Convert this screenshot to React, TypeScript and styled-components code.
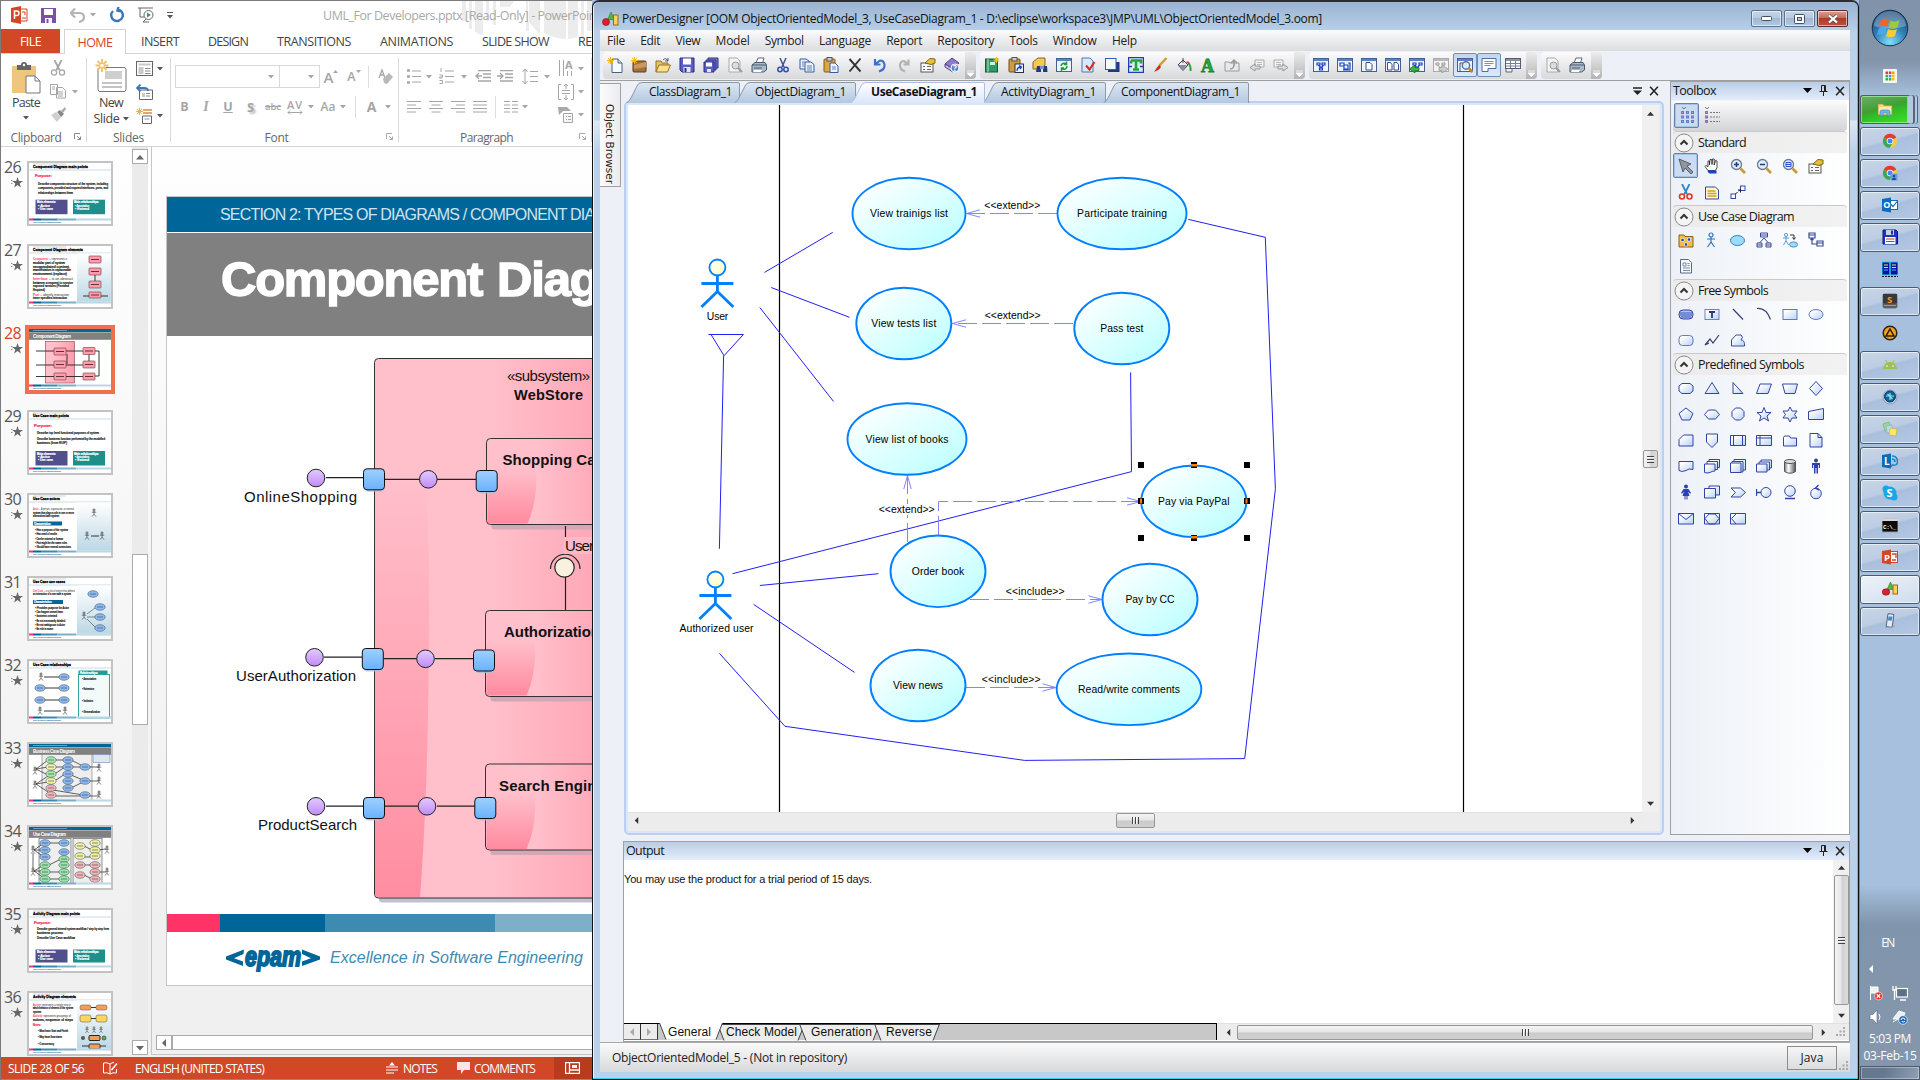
import React, { useLayoutEffect, useRef, useState } from "react";
import styled, { createGlobalStyle, css } from "styled-components";

const UI = `"Open Sans", "Noto Sans", sans-serif`;
const ARIAL = `"Liberation Sans", Arial, sans-serif`;

const Global = createGlobalStyle`
  * { box-sizing: border-box; }
  html, body { margin: 0; padding: 0; overflow: hidden; background: #a7c0dd; }
  svg { display: block; flex: none; }
`;

/* ---------- text fitted to a given run length ---------- */
const FitSpan = styled.span`
  display: inline-block;
  white-space: pre;
  flex: none;
`;
function Fit({ w, children, className }: { w: number; children: string; className?: string }) {
  const ref = useRef<HTMLSpanElement>(null);
  const [ls, setLs] = useState(0);
  useLayoutEffect(() => {
    const r = ref.current!.getBoundingClientRect();
    setLs((w - Math.max(r.width, r.height)) / children.length);
  }, [w, children]);
  return (
    <FitSpan ref={ref} className={className} style={{ letterSpacing: `${ls}px` }}>
      {children}
    </FitSpan>
  );
}

/* ---------- shell ---------- */
const Desktop = styled.div`
  width: 1920px;
  height: 1080px;
  display: flex;
  overflow: hidden;
  font-family: ${UI};
  font-size: 12px;
  color: #222;
`;

/* =================== PowerPoint =================== */
const Ppt = styled.div`
  width: 592px;
  height: 1080px;
  display: flex;
  flex-direction: column;
  border-left: 1px solid #7b7b7b;
  border-top: 1px solid #7b7b7b;
  background: #fff;
  overflow: hidden;
`;
const PptTitle = styled.div`
  height: 28px;
  display: flex;
  align-items: center;
  position: relative;
  padding-left: 10px;
  flex: none;
`;
const TitleArt = styled.svg`
  position: absolute;
  left: 455px;
  top: 0;
`;
const PptCaption = styled.div`
  margin-left: 150px;
  color: #a9a9a9;
  font-size: 12.5px;
  position: relative;
  white-space: nowrap;
`;
const PptTabs = styled.div`
  height: 25px;
  display: flex;
  align-items: stretch;
  border-bottom: 1px solid #d4d4d4;
  font-size: 12.5px;
  color: #444;
  flex: none;
  position: relative;
`;
const FileTab = styled.div`
  width: 59px;
  background: #d24726;
  color: #fff;
  display: flex;
  align-items: center;
  justify-content: center;
  flex: none;
`;
const PptTab = styled.div<{ $ml: number; $active?: boolean }>`
  margin-left: ${(p) => p.$ml}px;
  display: flex;
  align-items: center;
  flex: none;
  ${(p) =>
    p.$active &&
    css`
      width: 62px;
      justify-content: center;
      color: #d24726;
      border: 1px solid #d4d4d4;
      border-bottom: none;
      background: #fff;
      margin-bottom: -1px;
    `}
`;
const Ribbon = styled.div`
  height: 93px;
  display: flex;
  border-bottom: 1px solid #d4d4d4;
  padding-top: 4px;
  flex: none;
`;
const Group = styled.div<{ $w: number }>`
  width: ${(p) => p.$w}px;
  height: 84px;
  border-right: 1px solid #d9d9d9;
  display: flex;
  flex-direction: column;
  justify-content: space-between;
  flex: none;
`;
const GroupBody = styled.div`
  display: flex;
  height: 71px;
`;
const GroupLabel = styled.div`
  height: 16px;
  display: flex;
  align-items: center;
  justify-content: center;
  color: #666;
  font-size: 12px;
  position: relative;
  margin-bottom: -3px;
`;
const Launcher = styled.svg`
  position: absolute;
  right: 5px;
  top: 4px;
`;
const Col = styled.div<{ $w?: number; $ml?: number; $pt?: number; $gap?: number; $start?: boolean }>`
  display: flex;
  flex-direction: column;
  align-items: ${(p) => (p.$start ? "flex-start" : "center")};
  width: ${(p) => (p.$w ? p.$w + "px" : "auto")};
  margin-left: ${(p) => p.$ml || 0}px;
  padding-top: ${(p) => p.$pt || 0}px;
  gap: ${(p) => p.$gap || 0}px;
  flex: none;
`;
const Row = styled.div<{ $h?: number; $gap?: number; $ml?: number; $mt?: number }>`
  display: flex;
  align-items: center;
  height: ${(p) => (p.$h ? p.$h + "px" : "auto")};
  gap: ${(p) => p.$gap || 0}px;
  margin-left: ${(p) => p.$ml || 0}px;
  margin-top: ${(p) => p.$mt || 0}px;
`;
const Cell = styled.div<{ $w: number }>`
  width: ${(p) => p.$w}px;
  display: flex;
  align-items: center;
  justify-content: center;
  flex: none;
`;
const BigLabel = styled.div`
  height: 16px;
  line-height: 16px;
  font-size: 12.5px;
  color: #444;
  display: flex;
  align-items: center;
  gap: 3px;
`;
const Combo = styled.div<{ $w: number }>`
  width: ${(p) => p.$w}px;
  height: 23px;
  border: 1px solid #d9d9d9;
  margin-right: -1px;
  display: flex;
  align-items: center;
  justify-content: flex-end;
  padding-right: 5px;
`;
const Glyph = styled.span<{ $b?: boolean; $i?: boolean; $u?: boolean; $s?: number; $strike?: boolean; $shadow?: boolean }>`
  color: #a6a6a6;
  font-size: ${(p) => p.$s || 13}px;
  line-height: 16px;
  font-weight: ${(p) => (p.$b ? 700 : 600)};
  font-style: ${(p) => (p.$i ? "italic" : "normal")};
  font-family: ${(p) => (p.$i ? `"Liberation Serif", serif` : UI)};
  text-decoration: ${(p) => (p.$u ? "underline" : p.$strike ? "line-through" : "none")};
  text-shadow: ${(p) => (p.$shadow ? "2px 2px 2px #bbb" : "none")};
`;
const Sep = styled.div<{ $h?: number }>`
  width: 1px;
  height: ${(p) => p.$h || 22}px;
  background: #dcdcdc;
`;
const PptMain = styled.div`
  height: 910px;
  display: flex;
  flex: none;
  background: linear-gradient(#fefefe, #f0f0f0 85%);
`;
const ThumbList = styled.div`
  width: 131px;
  height: 910px;
  padding-top: 14px;
  overflow: hidden;
  flex: none;
`;
const ThumbRow = styled.div`
  height: 83px;
  display: flex;
`;
const ThumbNum = styled.div<{ $sel?: boolean }>`
  width: 26px;
  font-size: 16px;
  line-height: 12px;
  color: ${(p) => (p.$sel ? "#d24726" : "#555")};
  display: flex;
  flex-direction: column;
  align-items: flex-start;
  gap: 4px;
  padding-left: 3px;
`;
const StarMark = styled.svg`
  margin-left: 7px;
`;
const ThumbFrame = styled.div<{ $sel?: boolean }>`
  width: 86px;
  height: 65px;
  border: 2px solid ${(p) => (p.$sel ? "#f0704d" : "#c3c3c3")};
  outline: ${(p) => (p.$sel ? "2px solid #f0704d" : "none")};
  background: #fff;
  overflow: hidden;
`;
const VScroll = styled.div`
  width: 16px;
  height: 909px;
  padding-top: 2px;
  display: flex;
  flex-direction: column;
  flex: none;
  background: #ebebeb;
`;
const ScrollBox = styled.div<{ $h: number; $mt?: number }>`
  height: ${(p) => p.$h}px;
  margin-top: ${(p) => p.$mt || 0}px;
  border: 1px solid #ababab;
  background: #fff;
  display: flex;
  align-items: center;
  justify-content: center;
  flex: none;
`;
const Stage = styled.div`
  margin-left: 3px;
  border-left: 1px solid #c6c6c6;
  flex: 1;
  min-width: 0;
  height: 908px;
  overflow: hidden;
  border-bottom: 1px solid #c6c6c6;
`;
const Slide = styled.div`
  margin: 49px 0 0 14px;
  height: 790px;
  border: 1px solid #c6c6c6;
  border-right: none;
  background: #fff;
  overflow: hidden;
`;
const SectionBand = styled.div`
  height: 35px;
  background: #006699;
  color: #cfe4f2;
  font: 16px ${ARIAL};
  padding-left: 53px;
  display: flex;
  align-items: center;
  margin-bottom: 1px;
`;
const TitleBand = styled.div`
  height: 103px;
  background: #808080;
  color: #fff;
  font: bold 49px ${ARIAL};
  -webkit-text-stroke: 1.5px #fff;
  padding: 0 0 12px 54px;
  display: flex;
  align-items: center;
  gap: 15px;
  white-space: nowrap;
`;
const Stripe = styled.div`
  height: 18px;
  display: flex;
`;
const StripePart = styled.div<{ $w: number; $c: string }>`
  width: ${(p) => p.$w}px;
  background: ${(p) => p.$c};
  flex: none;
`;
const SlideFoot = styled.div`
  height: 53px;
  padding: 14px 0 0 59px;
  display: flex;
  gap: 10px;
  color: #3f8ab3;
  font: italic 16px ${ARIAL};
`;
const Tagline = styled.div`
  padding-top: 3px;
`;
const HScroll = styled.div`
  margin: 49px 0 0 4px;
  height: 15px;
  display: flex;
`;
const HBtn = styled.div`
  width: 16px;
  border: 1px solid #ababab;
  background: #fff;
  display: flex;
  align-items: center;
  justify-content: center;
`;
const HThumb = styled.div`
  flex: 1;
  border: 1px solid #ababab;
  border-right: none;
  background: #fff;
`;
const PptStatus = styled.div`
  height: 23px;
  background: #d24726;
  border-bottom: 1px solid #8a8a8a;
  color: #fff;
  font-size: 12px;
  display: flex;
  align-items: center;
  padding-left: 7px;
  flex: none;
`;
const Push = styled.div<{ $w: number }>`
  width: ${(p) => p.$w}px;
  flex: none;
`;
const ViewBtn = styled.div`
  width: 38px;
  height: 22px;
  background: #b83b1d;
  display: flex;
  align-items: center;
  padding-left: 11px;
`;

const Caret = ({ c = "#a6a6a6" }: { c?: string }) => (
  <svg width="6" height="4" viewBox="0 0 6 4"><path d="M0 0h6L3 3.6z" fill={c} /></svg>
);
const Tri = ({ d, c = "#555", s = 8 }: { d: "up" | "down" | "left" | "right"; c?: string; s?: number }) => {
  const p = { up: "M0 6.5L4 2l4 4.5z", down: "M0 2h8L4 6.5z", left: "M6 0v8L2 4z", right: "M2 0v8l4-4z" }[d];
  return <svg width={s} height={s} viewBox="0 0 8 8"><path d={p} fill={c} /></svg>;
};

function Epam() {
  return (
    <svg width="94" height="26" viewBox="0 0 94 26">
      <path d="M18 3.5L0 10.500v3l17 6.500V15.500L8 12.200 17.500 8zM76 3.500L94 10.500v3l-18 6.500V15.500l9-3.300L76 8z" fill="#00669a" />
      <text x="19" y="20" fontFamily={ARIAL} fontWeight="700" fontStyle="italic" fontSize="27" textLength="56" lengthAdjust="spacingAndGlyphs" fill="#00669a" stroke="#00669a" strokeWidth="1.9">epam</text>
    </svg>
  );
}

/* ---------- component diagram on the slide ---------- */
const CompBox = ({ x, y, label, tx, tw }: { x: number; y: number; label: string; tx: number; tw: number }) => (
  <g>
    <rect x={x + 5} y={y + 5} width="150" height="86" rx="3" fill="#d3a7b5" />
    <rect x={x} y={y} width="150" height="86" rx="4" fill="url(#pinkH2)" stroke="#333" />
    <path d={`M${x + 1} ${y + 30}h48q3 30-8 55h-37q-3 0-3-3z`} fill="url(#gloss2)" />
    <text x={tx} y={y + 26.5} fontWeight="700" fontSize="15" textLength={tw}>{label}</text>
  </g>
);
const Port = ({ x, y }: { x: number; y: number }) => (
  <g>
    <rect x={x + 2} y={y + 5} width="18" height="18" rx="3" fill="#a9bdd6" opacity=".8" />
    <rect x={x} y={y} width="21" height="21" rx="3.5" fill="url(#portG)" stroke="#111" />
  </g>
);
const Ball = ({ x, y }: { x: number; y: number }) => <circle cx={x} cy={y} r="8.8" fill="url(#ballG)" stroke="#222" />;

function SlideDiagram() {
  return (
    <svg width="427" height="578" viewBox="167 336 427 578" fontFamily={ARIAL} fontSize="15" fill="#111">
      <defs>
        <linearGradient id="pinkH" gradientUnits="userSpaceOnUse" x1="374" x2="640" y1="0" y2="0"><stop offset=".45" stopColor="#ffbfcb" /><stop offset="1" stopColor="#ff9dad" /></linearGradient>
        <linearGradient id="pinkH2" x1="0" x2="1" y1="0" y2="0"><stop offset=".35" stopColor="#ffbfcb" /><stop offset="1" stopColor="#ff9aab" /></linearGradient>
        <linearGradient id="gloss" x1="0" x2="0" y1="0" y2="1"><stop offset="0" stopColor="#ffbfcb" /><stop offset="1" stopColor="#ff8da1" /></linearGradient>
        <linearGradient id="gloss2" x1="0" x2="0" y1="0" y2="1"><stop offset="0" stopColor="#ffbfcb" /><stop offset="1" stopColor="#ff8a9f" /></linearGradient>
        <linearGradient id="portG" x1="0" x2="0" y1="0" y2="1"><stop offset="0" stopColor="#9fd0ff" /><stop offset="1" stopColor="#6ab2fb" /></linearGradient>
        <linearGradient id="ballG" x1="0" x2="0" y1="0" y2="1"><stop offset="0" stopColor="#e2cbff" /><stop offset="1" stopColor="#c08bf7" /></linearGradient>
      </defs>
      <rect x="379" y="364" width="260" height="538.5" rx="3" fill="#bfc1d3" />
      <rect x="374.5" y="358.5" width="260" height="539.5" rx="4" fill="url(#pinkH)" stroke="#333" />
      <path d="M375 480h51q3 60 3 120q0 180-9 297h-42q-3 0-3-3z" fill="url(#gloss)" />
      <CompBox x={486.5} y={438.5} label="Shopping Cart" tx={502.5} tw={104} />
      <CompBox x={485.5} y={610.5} label="Authorization" tx={504} tw={96} />
      <CompBox x={485.5} y={764} label="Search Engine" tx={499} tw={106} />
      <g stroke="#222" strokeWidth="1.2">
        <path d="M326 477.7h38M385 479.3h35M437 479.3h39M324 657.2h38M384 658.6h33M435 658.6h39M326 806.2h38M385 806.2h33M437 806.2h38" />
        <path d="M565.5 526v12M565.5 577v33" />
        <path d="M550.5 569a14.6 14.6 0 0 1 29.5 0" fill="none" />
        <circle cx="564.5" cy="567.5" r="9.7" fill="#faf0e0" />
      </g>
      <rect x="564" y="537" width="40" height="17" fill="#ffb9c6" />
      <text x="565" y="551" textLength="29">User</text>
      <Ball x={316} y={478} /><Ball x={428.3} y={479.3} /><Ball x={314.5} y={657.3} /><Ball x={425.5} y={658.8} /><Ball x={316} y={806.3} /><Ball x={427} y={806.3} />
      <Port x={363.5} y={468.8} /><Port x={476.2} y={470.5} /><Port x={362.3} y={648.5} /><Port x={473.5} y={650} /><Port x={363.5} y={797.5} /><Port x={474.8} y={797.5} />
      <text x="507" y="381" textLength="83">«subsystem»</text>
      <text x="514" y="400" textLength="69" fontWeight="700" fontSize="14.5">WebStore</text>
      <text x="244" y="502" textLength="113">OnlineShopping</text>
      <text x="236" y="681" textLength="120">UserAuthorization</text>
      <text x="258" y="830" textLength="99">ProductSearch</text>
    </svg>
  );
}

/* ---------- thumbnails ---------- */
const Man = ({ x, y, s = 1 }: { x: number; y: number; s?: number }) => (
  <g transform={`translate(${x} ${y}) scale(${s})`} stroke="#333" strokeWidth=".6" fill="none">
    <circle r="1.1" cy="-3" fill="#e8c896" /><path d="M0-2v3.2M-2.2-.8h4.4M0 1.2l-2 2.4M0 1.2l2 2.4" />
  </g>
);
const Ov = ({ x, y, c = "#8db9f0" }: { x: number; y: number; c?: string }) => (
  <g><ellipse cx={x} cy={y} rx="5.2" ry="3.3" fill={c} stroke="#345" strokeWidth=".5" /><path d={`M${x - 3} ${y}h6`} stroke="#345" strokeWidth=".6" /></g>
);
const PinkBox = ({ x, y, w = 12, h = 7 }: { x: number; y: number; w?: number; h?: number }) => (
  <g><rect x={x} y={y} width={w} height={h} rx=".7" fill="#ff9cae" stroke="#733" strokeWidth=".6" /><path d={`M${x + 2} ${y + h / 2}h${w - 4}`} stroke="#522" strokeWidth=".9" /></g>
);
const Foot = () => (
  <g><rect y="55.5" width="4" height="2" fill="#ff3366" /><rect x="4" y="55.5" width="8" height="2" fill="#069" /><rect x="12" y="55.5" width="16" height="2" fill="#3d8bb0" /><rect x="28" y="55.5" width="19" height="2" fill="#7db0c8" /><rect x="47" y="55.5" width="35" height="2" fill="#bcd8e4" /><text x="4" y="60.3" fontSize="2" fill="#069" fontStyle="italic" textLength="28">epam | Excellence in Software Engineering</text></g>
);
const Head = ({ t, w }: { t: string; w: number }) => (
  <g><path d="M4 1h33" stroke="#999" strokeWidth=".4" /><text x="4" y="5.4" fontSize="4.2" fontWeight="700" fill="#000" stroke="#000" strokeWidth=".3" textLength={w} lengthAdjust="spacingAndGlyphs">{t}</text><path d="M0 7h82" stroke="#b9d3e2" strokeWidth=".8" /></g>
);
/* a line of body text; `red` is the highlighted word that opens it */
const Tx = ({ x, y, w, t, c = "#222", b, red }: { x: number; y: number; w: number; t: string; c?: string; b?: boolean; red?: string }) => (
  <text x={x} y={y} fontSize="2.9" textLength={w} lengthAdjust="spacingAndGlyphs" fill={c} fontWeight={b ? 700 : 500} stroke={red ? "none" : c} strokeWidth=".2">
    {red && <tspan fill="#ff3366" fontWeight="700">{red} </tspan>}
    {t}
  </text>
);
const DarkHead = ({ t, w }: { t: string; w: number }) => (
  <g><rect width="82" height="3" fill="#069" /><rect y="3.3" width="82" height="7.5" fill="#808080" /><text x="4" y="8.8" fontSize="4.5" fontWeight="700" fill="#fff" textLength={w}>{t}</text><path d="M4 1.5h34" stroke="#9fc6dc" strokeWidth=".6" /></g>
);
const TwoBoxes = ({ y, h = 14.5 }: { y: number; h?: number }) => (
  <g>
    <rect x="6.5" y={y} width="32" height={h} fill="#52508c" /><rect x="44" y={y} width="32" height={h} fill="#1f8f8b" />
    <Tx x={8} y={y + 3.6} w={19} t="Main elements:" c="#fff" b /><Tx x={45} y={y + 3.6} w={25} t="Main relationships:" c="#fff" b />
    <Tx x={9} y={y + 7} w={12} t="• Actor" c="#fff" /><Tx x={46} y={y + 7} w={14} t="• Association" c="#fff" />
    <Tx x={9} y={y + 10.3} w={15} t="• Use case" c="#fff" /><Tx x={46} y={y + 10.3} w={14} t="• Extend" c="#fff" />
  </g>
);
const SidePane = () => <rect x="48" y="7.4" width="34" height="48.2" fill="url(#sideG)" />;

const thumbs: { n: number; art: React.ReactNode }[] = [
  { n: 26, art: <><Head t="Component Diagram main points" w={55} /><Tx x={6} y={14} w={17} t="Purpose:" c="#ff3366" b /><Tx x={9} y={22} w={70} t="Describe components structure of the system, including" /><Tx x={9} y={26} w={70} t="components, provided and required interfaces, ports, and" /><Tx x={9} y={30.5} w={35} t="relationships between them" /><TwoBoxes y={36.7} /><Foot /></> },
  { n: 27, art: <><Head t="Component Diagram elements" w={50} /><SidePane /><Tx x={4} y={14} w={34} red="Component" t="– represents a" /><Tx x={4} y={18} w={32} t="modular part of system" /><Tx x={4} y={21.5} w={36} t="encapsulated content" /><Tx x={4} y={25} w={38} t="manifestation is replaceable" /><Tx x={4} y={28.5} w={34} t="environment (replace)" /><Tx x={4} y={34} w={40} red="Interface" t="– is an abstract" /><Tx x={4} y={37.5} w={40} t="between a request to service" /><Tx x={4} y={41} w={36} t="exposed services (Provided" /><Tx x={4} y={44.5} w={12} t="Required)" /><Tx x={4} y={49.5} w={36} red="Port" t="– identify interaction" /><Tx x={4} y={53} w={34} t="inner specifies interaction" /><PinkBox x={60} y={10} /><PinkBox x={60} y={22} /><PinkBox x={60} y={35} /><PinkBox x={60} y={46} h={6} /><path d="M66 29v6M54 50h6M72 50h7" stroke="#222" strokeWidth=".9" /><Foot /></> },
  { n: 28, art: <><DarkHead t="Component Diagram" w={38} /><rect x="16.5" y="12.5" width="29" height="41.5" fill="url(#pinkH2)" stroke="#844" strokeWidth=".6" /><path d="M7 22h50M7 36h50M7 47.5h50M62 22h8v25h-8M38 25v10M60 25v10" fill="none" stroke="#222" strokeWidth=".9" /><PinkBox x={25} y={19} /><PinkBox x={25} y={32} /><PinkBox x={25} y={44} /><PinkBox x={54} y={18.5} /><PinkBox x={54} y={32} /><PinkBox x={54} y={44} /><Foot /></> },
  { n: 29, art: <><Head t="Use Case main points" w={36} /><Tx x={5} y={15} w={18} t="Purpose:" c="#ff3366" b /><Tx x={8} y={22} w={62} t="Describe top level functional purposes of system" /><Tx x={8} y={28} w={68} t="Describe business function performed by the modelled" /><Tx x={8} y={32} w={30} t="business (from RUP)" /><TwoBoxes y={39} /><Foot /></> },
  { n: 30, art: <><Head t="Use Case actors" w={27} /><SidePane /><Tx x={4} y={15} w={41} red="Actor" t="– A person, organization, or external" /><Tx x={4} y={18.5} w={41} t="system that plays a role in one or more" /><Tx x={4} y={22} w={26} t="interactions with system" /><rect x="4" y="26.5" width="29" height="4" fill="#069" /><Tx x={5} y={29.7} w={17} t="Characteristics:" c="#fff" b /><Tx x={6} y={35.5} w={33} t="• Has a purpose of the system" /><Tx x={6} y={40} w={22} t="• Has need of results" /><Tx x={6} y={44.5} w={28} t="• Can be external or human" /><Tx x={6} y={49} w={32} t="• Part might be the same roles" /><Tx x={6} y={53} w={36} t="• Should have several connections" /><Man x={65} y={18} /><Man x={58} y={41} /><Man x={73} y={41} /><path d="M62 41h8" stroke="#222" strokeWidth=".9" /><Foot /></> },
  { n: 31, art: <><Head t="Use Case use cases" w={32} /><SidePane /><Tx x={4} y={13.5} w={42} red="Use Case" t="– is a list of events that defines" /><Tx x={4} y={17} w={38} t="an interaction of a user with a system" /><rect x="4" y="22" width="30" height="4" fill="#069" /><Tx x={5} y={25.2} w={18} t="Characteristics:" c="#fff" b /><Tx x={6} y={31} w={34} t="• Provides purpose for Actor" /><Tx x={6} y={35} w={28} t="• Can happen several times" /><Tx x={6} y={39} w={22} t="• business oriented" /><Tx x={6} y={43.5} w={30} t="• Be not necessarily detailed" /><Tx x={6} y={48} w={30} t="• Be not ambiguous to Actor" /><Tx x={6} y={52} w={18} t="• Be rich in name" /><Ov x={64} y={16} /><Ov x={71} y={29} /><Ov x={71} y={39} /><Ov x={71} y={50} /><Man x={55} y={38} /><path d="M58 36l8-6M58 39h8M58 41l8 8" stroke="#222" strokeWidth=".5" /><Foot /></> },
  { n: 32, art: <><Head t="Use Case relationships" w={38} /><rect x="49.5" y="9.5" width="29" height="4" fill="#1f9a96" /><rect x="49.5" y="13.5" width="31" height="43.5" fill="#f3fafa" stroke="#1f9a96" strokeWidth=".9" /><Tx x={51} y={12.6} w={18} t="Relationships:" c="#fff" b /><Tx x={53} y={19} w={14} t="• Association" /><Tx x={53} y={29} w={12} t="• Extension" /><Tx x={53} y={41} w={11} t="• Inclusion" /><Tx x={53} y={51.5} w={18} t="• Generalization" /><Man x={12} y={16} /><path d="M15 16h15M16 27h14M16 39h14M15 50h17" stroke="#222" strokeWidth=".9" /><Ov x={35} y={16} /><Ov x={11} y={27} /><Ov x={35} y={27} /><Ov x={11} y={39} /><Ov x={35} y={39} /><Man x={11} y={50} /><Man x={36} y={50} /><Foot /></> },
  { n: 33, art: <><DarkHead t="Business Case Diagram" w={42} /><rect x="13" y="10.5" width="50" height="46" fill="#eee" stroke="#777" strokeWidth=".6" /><rect x="64" y="10.5" width="17" height="8" fill="#dbe8f4" stroke="#57a" strokeWidth=".5" /><path d="M7 25l12-9M7 25l12-2M7 25l12 6M7 40l12-8M7 40l12-2M7 40l12 8M24 16l12 0M24 23h28M24 31l12-8M24 38l12-8M42 16l12 6M42 31l12 5M42 44l12-6M24 46l30 5M24 52h46M56 23h14M56 37h14" stroke="#222" strokeWidth=".7" fill="none" /><Ov x={22} y={16} c="#a4eaa4" /><Ov x={22} y={23} c="#f3f1a0" /><Ov x={22} y={30} c="#a4eaa4" /><Ov x={22} y={37} c="#f3f1a0" /><Ov x={22} y={44} c="#f7b4b4" /><Ov x={22} y={51} c="#f7b4b4" /><Ov x={39} y={16} /><Ov x={39} y={23} /><Ov x={39} y={30} /><Ov x={39} y={37} /><Ov x={39} y={44} /><Ov x={56} y={23} /><Ov x={56} y={37} /><Ov x={56} y={51} /><Man x={6} y={27} /><Man x={6} y={41} /><Man x={70} y={24} /><Man x={70} y={37} /><Man x={70} y={51} /><Foot /></> },
  { n: 34, art: <><DarkHead t="Use Case Diagram" w={33} /><rect x="10" y="11.5" width="32" height="45" fill="#eee" stroke="#666" strokeWidth=".7" /><rect x="44" y="11.5" width="29" height="45" fill="#eee" stroke="#666" strokeWidth=".7" /><path d="M5 23l10-7M5 23h10M5 23l10 7M4 26v15M5 44l10-6M5 44h10M5 44l10 7M20 16h12M20 38l12-6M20 45h12M20 52h12M55 19l8 4M55 30h8M55 38h8M55 48l8 4M68 23l9-1M68 45l9 0" stroke="#222" strokeWidth=".7" /><Ov x={16} y={16} /><Ov x={16} y={23} /><Ov x={16} y={30} /><Ov x={35} y={16} /><Ov x={35} y={25} /><Ov x={35} y={32} c="#97e6a4" /><Ov x={16} y={38} c="#97e6a4" /><Ov x={16} y={45} c="#97e6a4" /><Ov x={16} y={52} c="#97e6a4" /><Ov x={35} y={38} c="#97e6a4" /><Ov x={35} y={45} c="#97e6a4" /><Ov x={35} y={52} c="#97e6a4" /><Ov x={51} y={19} c="#f3f1a0" /><Ov x={66} y={16} c="#f3f1a0" /><Ov x={66} y={23} c="#f3f1a0" /><Ov x={51} y={29} c="#f3f1a0" /><Ov x={66} y={29} c="#f3f1a0" /><Ov x={51} y={38} c="#f7b4b4" /><Ov x={66} y={38} c="#f7b4b4" /><Ov x={66} y={45} c="#f7b4b4" /><Ov x={51} y={48} c="#f7b4b4" /><Ov x={66} y={52} c="#f7b4b4" /><Man x={4} y={23} /><Man x={4} y={45} /><Man x={78} y={23} /><Man x={78} y={45} /><Foot /></> },
  { n: 35, art: <><Head t="Activity Diagram main points" w={47} /><Tx x={5} y={14} w={17} t="Purpose:" c="#ff3366" b /><Tx x={8} y={20} w={72} t="Describe general internal system workflow / step by step from" /><Tx x={8} y={23.5} w={26} t="business process" /><Tx x={8} y={28.5} w={38} t="Describe Use Case workflow" /><TwoBoxes y={39.5} h={13} /><Foot /></> },
  { n: 36, art: <><Head t="Activity Diagram elements" w={43} /><SidePane /><Tx x={4} y={12.5} w={38} red="Action" t="represents a single step in" /><Tx x={4} y={16} w={40} t="which behavior of element of the system" /><Tx x={4} y={20} w={8} t="system" /><Tx x={4} y={24} w={38} red="Activity" t="represents groupings of" /><Tx x={4} y={27.5} w={40} t="actions, sequence of steps" /><Tx x={4} y={33} w={8} t="Notes:" c="#ff3366" b /><Tx x={9} y={38.5} w={30} t="• Must have Start and Finish" /><Tx x={9} y={45} w={24} t="• May have flow states" /><Tx x={9} y={52} w={16} t="• Concurrency" /><path d="M62 14.5h5M62 25.500h5M60 46h8M53 53h24" stroke="#222" strokeWidth=".9" /><rect x="51" y="12" width="11" height="5" rx="2" fill="#f0a05a" stroke="#743" strokeWidth=".5" /><rect x="67" y="12" width="11" height="5" rx="2" fill="#f0a05a" stroke="#743" strokeWidth=".5" /><rect x="51" y="22" width="11" height="7" rx="2" fill="#f4da62" stroke="#743" strokeWidth=".5" /><rect x="67" y="22" width="11" height="7" rx="2" fill="#f4da62" stroke="#743" strokeWidth=".5" /><Man x={58} y={37} s={0.8} /><Man x={65} y={37} s={0.8} /><Man x={72} y={37} s={0.8} /><rect x="60" y="42.5" width="11" height="5" rx="1" fill="#f0a05a" stroke="#222" /><circle cx="54" cy="45" r="2" fill="#555" /><circle cx="75" cy="45" r="2" fill="#7a5" stroke="#222" strokeWidth=".6" /><rect x="60" y="51" width="11" height="5" rx="1" fill="#f0a05a" stroke="#222" strokeWidth=".8" /><Foot /></> },
];

const Star = () => (
  <StarMark width="12" height="11" viewBox="0 0 12 11"><path d="M6.5 0l1.4 3.9 4.1.1-3.3 2.5 1.2 4-3.4-2.4-3.3 2.4 1.1-4L1.2 4l4-.1z" fill="#666" /><path d="M0 3.5h1.5M0 6.5h1.5" stroke="#777" strokeWidth=".8" /></StarMark>
);

/* =================== PowerDesigner =================== */
const Pd = styled.div`
  width: 1267px;
  height: 1080px;
  flex: none;
  background: linear-gradient(#9cb5d3 2px, #b9d1ea 30px, #bdd3ea 118px, #dde8f4 119px, #b9d1ea 150px);
  border: 1px solid #111;
  border-top: 2px solid #2c2c34;
  border-radius: 7px 7px 0 0;
  box-shadow: inset -1px -1px 0 #2fd3ea, inset 1px 0 0 #eef5fc;
  padding: 0 8px 7px 7px;
  display: flex;
  flex-direction: column;
  overflow: hidden;
`;
const PdTitle = styled.div`
  height: 28px;
  display: flex;
  align-items: center;
  padding: 5px 2px 0 2px;
  gap: 3px;
  flex: none;
  font-size: 12px;
  color: #111;
`;
const WinButtons = styled.div`
  margin-left: auto;
  display: flex;
  gap: 2px;
`;
const WinBtn = styled.div<{ $close?: boolean }>`
  width: 31px;
  height: 17px;
  border: 1px solid ${(p) => (p.$close ? "#5a2b32" : "#5f7288")};
  border-radius: 2px;
  box-shadow: inset 0 0 0 1px rgba(255, 255, 255, 0.55);
  background: ${(p) =>
    p.$close ? "linear-gradient(#dca096, #c4685a 48%, #b23a26 50%, #c05040)" : "linear-gradient(#c4d5e8, #b4c9e0 48%, #a0b8d4 50%, #b2c9e3)"};
  display: flex;
  align-items: center;
  justify-content: center;
`;
const Menu = styled.div`
  height: 21px;
  background: linear-gradient(#fbfbfc, #dcdddf);
  display: flex;
  align-items: center;
  padding-left: 7px;
  gap: 15.2px;
  flex: none;
`;
const Bars = styled.div`
  height: 30px;
  display: flex;
  gap: 4px;
  padding: 1px 0 1px 3px;
  background: #edf0f6;
  border-bottom: 1px solid #a0a0a0;
  flex: none;
`;
const Bar = styled.div<{ $w: number }>`
  width: ${(p) => p.$w}px;
  height: 27px;
  border-radius: 4px;
  background: linear-gradient(#fbfbfc, #d8d9db);
  display: flex;
  align-items: flex-start;
  padding-top: 1px;
  overflow: hidden;
  flex: none;
`;
const BarEnd = styled.div`
  margin: -1px 0 0 auto;
  width: 11px;
  align-self: stretch;
  background: linear-gradient(#ececec, #b4b4b4);
  display: flex;
  align-items: flex-end;
  justify-content: center;
  padding-bottom: 2px;
`;
const Tool = styled.div<{ $on?: boolean }>`
  width: 24.05px;
  height: 24px;
  display: flex;
  align-items: center;
  justify-content: center;
  flex: none;
  ${(p) =>
    p.$on &&
    css`
      border: 1px solid #6d8fb8;
      border-radius: 2px;
      background: linear-gradient(#c3d7f0, #dbe8f8);
    `}
`;
const Work = styled.div`
  height: 961px;
  background: #edf1f7;
  display: flex;
  flex-direction: column;
  flex: none;
`;
const WorkTop = styled.div`
  height: 754px;
  display: flex;
`;
const SideStrip = styled.div`
  width: 24px;
  padding-top: 2px;
  flex: none;
`;
const ObjBrowser = styled.div`
  width: 21px;
  height: 104px;
  border: 1px solid #a0a0a0;
  border-left: none;
  background: linear-gradient(90deg, #fcfcfd, #ececee);
  writing-mode: vertical-rl;
  font: 10.5px "DejaVu Sans", sans-serif;
  color: #30201a;
  display: flex;
  align-items: center;
  padding: 20px 0 0 0;
`;
const Doc = styled.div`
  width: 1040px;
  display: flex;
  flex-direction: column;
  flex: none;
`;
const DocTabs = styled.div`
  height: 20px;
  display: flex;
  padding-left: 2px;
`;
const TabBox = styled.div<{ $w: number; $pl: number; $ml: number; $on?: boolean }>`
  width: ${(p) => p.$w}px;
  margin-left: ${(p) => p.$ml}px;
  padding-left: ${(p) => p.$pl}px;
  position: relative;
  z-index: ${(p) => (p.$on ? 2 : 1)};
  font-weight: ${(p) => (p.$on ? 700 : 400)};
  font-size: 12px;
  line-height: 21px;
  color: #111;
  flex: none;
`;
const TabShape = styled.svg`
  position: absolute;
  left: 0;
  top: 1px;
  z-index: -1;
`;
const DocBtns = styled.div`
  margin-left: auto;
  display: flex;
  align-items: center;
  gap: 7px;
  padding-right: 5px;
`;
const DocFrame = styled.div`
  height: 734px;
  border: 2px solid #bccff0;
  background: #dbe6fa;
  border-radius: 5px;
  padding: 2px;
  position: relative;
`;
const DocInner = styled.div`
  display: grid;
  grid-template-columns: 1014px 1fr;
  grid-template-rows: 707px 1fr;
  height: 726px;
  background: #ededed;
`;
const Canvas = styled.div`
  background: #fff;
`;
const VBar = styled.div`
  background: #f0f0f0;
  display: flex;
  flex-direction: column;
  align-items: center;
  width: 16px;
`;
const HBar = styled.div<{ $grow?: boolean }>`
  background: #ececec;
  border-top: 1px solid #e0e0e0;
  display: flex;
  align-items: center;
  height: ${(p) => (p.$grow ? 17 : 16)}px;
  ${(p) => p.$grow && "flex: 1;"}
`;
const ThumbV = styled.div<{ $h: number }>`
  width: 15px;
  height: ${(p) => p.$h}px;
  border: 1px solid #979797;
  border-radius: 2px;
  background: linear-gradient(90deg, #f4f4f4, #e6e6e6 48%, #cfcfd2 52%, #dcdcdc);
  display: flex;
  align-items: center;
  justify-content: center;
  flex: none;
`;
const ThumbH = styled.div<{ $w: number }>`
  height: 15px;
  width: ${(p) => p.$w}px;
  border: 1px solid #979797;
  border-radius: 2px;
  background: linear-gradient(#f4f4f4, #e6e6e6 48%, #cbcbce 52%, #cfcfcf);
  display: flex;
  align-items: center;
  justify-content: center;
  flex: none;
`;
const Spacer = styled.div<{ $h?: number; $w?: number }>`
  height: ${(p) => p.$h || 1}px;
  width: ${(p) => p.$w || 1}px;
  flex: none;
`;
const Toolbox = styled.div`
  margin-left: 6px;
  width: 180px;
  height: 754px;
  border: 1px solid #a0a0a0;
  background: linear-gradient(90deg, #edf1f7, #fff);
  flex: none;
`;
const PanelHead = styled.div`
  height: 18px;
  background: linear-gradient(#b9cce6, #e3edfb);
  display: flex;
  align-items: center;
  padding: 0 4px 2px 2px;
  font-size: 12.5px;
  color: #151515;
  flex: none;
`;
const PanelBtns = styled.div`
  margin-left: auto;
  display: flex;
  align-items: center;
  gap: 7px;
  padding-top: 1px;
`;
const ToolStrip = styled.div`
  height: 30px;
  margin: 1px 2px 0;
  background: linear-gradient(#fbfbfc, #d3d4d6);
  border-radius: 0 4px 4px 0;
  display: flex;
  align-items: center;
  padding: 0 0 2px 1px;
`;
const SecHead = styled.div`
  height: 22px;
  margin: 0 2px;
  background: linear-gradient(90deg, #ebebec, #f2f2f2);
  border-top: 1px solid #c9c9c9;
  border-radius: 4px 4px 0 0;
  display: flex;
  align-items: center;
  gap: 4px;
  padding-left: 1px;
  font-size: 12.5px;
  color: #151515;
`;
const SecGrid = styled.div`
  display: grid;
  grid-template-columns: repeat(6, 26px);
  grid-auto-rows: 26px;
  padding-left: 2px;
`;
const GridTool = styled.div<{ $on?: boolean }>`
  width: 25px;
  height: 25px;
  display: flex;
  align-items: center;
  justify-content: center;
  ${(p) =>
    p.$on &&
    css`
      border: 1px solid #6484b0;
      border-radius: 2px;
      box-shadow: inset 0 0 0 1px #a9c1e2;
      background: #c9dcf4;
    `}
`;
const Output = styled.div`
  margin: 6px 0 0 23px;
  height: 201px;
  border: 1px solid #a0a0a0;
  background: #fff;
  display: flex;
  flex-direction: column;
`;
const OutBody = styled.div`
  height: 163px;
  display: flex;
`;
const OutText = styled.div`
  flex: 1;
  padding: 13px 0 0 0;
  font: 11px ${ARIAL};
  color: #111;
`;
const OutFoot = styled.div`
  height: 18px;
  display: flex;
`;
const OutTabs = styled.div`
  width: 593px;
  height: 17px;
  background: #c8c8c8;
  border-top: 1px solid #000;
  border-right: 1px solid #000;
  display: flex;
  font: 12px ${ARIAL};
  color: #111;
`;
const NavBtn = styled.div`
  width: 17px;
  height: 16px;
  background: #ececec;
  border-right: 1px solid #333;
  border-bottom: 1px solid #777;
  display: flex;
  align-items: center;
  justify-content: center;
`;
const SheetTab = styled.div<{ $w: number; $pl: number; $ml: number; $on?: boolean }>`
  width: ${(p) => p.$w}px;
  height: 17px;
  margin-left: ${(p) => p.$ml}px;
  margin-top: ${(p) => (p.$on ? -1 : 0)}px;
  padding-left: ${(p) => p.$pl}px;
  line-height: ${(p) => (p.$on ? 18 : 16)}px;
  position: relative;
  z-index: ${(p) => (p.$on ? 2 : 1)};
  flex: none;
`;
const SheetShape = styled.svg`
  position: absolute;
  left: 0;
  top: 0;
  z-index: -1;
`;
const PdStatus = styled.div`
  height: 30px;
  background: linear-gradient(#fafafb, #d8d9da);
  border-top: 1px solid #a9a9a9;
  display: flex;
  align-items: center;
  padding-left: 12px;
  color: #222;
  flex: none;
`;
const JavaBtn = styled.div`
  margin-left: auto;
  width: 50px;
  height: 24px;
  border: 1px solid #8c8c8c;
  display: flex;
  align-items: center;
  justify-content: center;
`;
const ResizeCorner = styled.div`
  width: 13px;
  height: 26px;
  padding-left: 2px;
  display: flex;
  align-items: flex-end;
`;

const Grip = ({ v }: { v?: boolean }) => (
  <svg width="9" height="9" viewBox="0 0 9 9"><path d={v ? "M1 1.5h7M1 4.5h7M1 7.5h7" : "M1.5 1v7M4.5 1v7M7.5 1v7"} stroke="#444" /><path d={v ? "M1 2.5h7M1 5.5h7" : "M2.5 1v7M5.5 1v7"} stroke="#fff" strokeWidth=".8" /></svg>
);
const Dots = () => (
  <svg width="10" height="10" viewBox="0 0 10 10"><g fill="#a8a8a8"><path d="M7 0h2v2H7zM7 3.5h2v2H7zM3.5 3.5h2v2h-2zM7 7h2v2H7zM3.5 7h2v2h-2zM0 7h2v2H0z" /></g></svg>
);
const CloseX = ({ s = 9 }: { s?: number }) => <svg width={s} height={s} viewBox="0 0 9 9"><path d="M1 .7l7 7.6M8 .7L1 8.3" stroke="#222" strokeWidth="1.4" /></svg>;
const Pin = () => <svg width="9" height="11" viewBox="0 0 9 11"><path d="M2.5.5h4v6h-4zM5.5 1v5M.5 6.5h8M4.5 7v4" stroke="#222" fill="none" /></svg>;
const HeadBtns = () => (
  <PanelBtns>
    <svg width="9" height="5" viewBox="0 0 9 5"><path d="M0 0h9L4.5 5z" fill="#000" /></svg>
    <Pin />
    <CloseX s={10} />
  </PanelBtns>
);
const Logo = () => (
  <svg width="17" height="16" viewBox="0 0 17 16"><path d="M9 1l3.5 7.5h-7z" fill="#4fb848" stroke="#2a7d2c" strokeWidth=".6" /><circle cx="4" cy="11" r="3.5" fill="#d8232a" stroke="#8d1015" strokeWidth=".6" /><rect x="11.5" y="4" width="4.5" height="10" fill="#f6d35b" stroke="#9a6b14" /></svg>
);

/* ---------- 16px icon set ---------- */
const N = "#3a4a9a";
const winFrame = <><rect x=".5" y="1.5" width="15" height="13" fill="#eef3fd" stroke="#46608f" /><path d="M1 3h14" stroke="#5d82c4" strokeWidth="2" /></>;
const icons: Record<string, React.ReactNode> = {
  new: <><path d="M5 2h6l4 4v9.500h-10z" fill="#f6faff" stroke="#4a5f85" /><path d="M11 2v4h4" fill="#cfdcf0" stroke="#4a5f85" /><path d="M3.500 0v7M0 3.500h7M1 1l5 5M6 1L1 6" stroke="#e9b52a" /></>,
  project: <><rect x="2" y="4" width="13" height="11" rx="1" fill="#a4703c" stroke="#5c3a17" /><path d="M3 8l12-3v5l-12 2z" fill="#c99863" /><path d="M3.500 0v7M0 3.500h7M1 1l5 5M6 1L1 6" stroke="#f0bc2c" /></>,
  open: <><path d="M1 15V4h5l1 2h6v3" fill="#e6c35c" stroke="#94712a" /><path d="M1 15l3-7h11.500l-3 7z" fill="#fbe08b" stroke="#94712a" /><path d="M8 3q3-3 5 1m0-3v3h-3" fill="none" stroke="#45597e" /></>,
  save: <><path d="M1 1h14v14H3l-2-2z" fill="#5a5fc8" stroke="#2a2c7c" /><rect x="4" y="1.500" width="8" height="6" fill="#fff" /><rect x="4.500" y="10" width="7" height="5" fill="#e6e6f2" /><rect x="5.500" y="11" width="2" height="4" fill="#30327a" /></>,
  saveall: <><path d="M5 1h10v10H5z" fill="#8084dc" stroke="#2a2c7c" /><path d="M3 3h10v10H3z" fill="#6c70d0" stroke="#2a2c7c" /><path d="M1 5h10v10H1z" fill="#5a5fc8" stroke="#2a2c7c" /><rect x="3" y="5.500" width="6" height="4" fill="#fff" /><rect x="4" y="12" width="4" height="3" fill="#e6e6f2" /></>,
  preview: <><path d="M2 1h8l3 3v11H2z" fill="#f4f4f4" stroke="#aaa" /><circle cx="8.500" cy="8.500" r="3.500" fill="#ddd" stroke="#999" /><path d="M11 11l4 4" stroke="#999" strokeWidth="2" /></>,
  print: <><path d="M5 6l2-5h6l-1.500 5" fill="#fff" stroke="#5a6b80" /><path d="M1 8l3-2.500h10L15.500 8v5l-3 2H1z" fill="#a9bac9" stroke="#4a5b70" /><path d="M1 8h14M3 11h8" stroke="#4a5b70" /><path d="M3 13h8l-1 2H2z" fill="#fff" /></>,
  cut: <><path d="M5 1l4 9M11 1L7 10" stroke="#3d567f" strokeWidth="1.500" /><circle cx="5" cy="12.500" r="2.200" fill="none" stroke="#3050b0" strokeWidth="1.500" /><circle cx="11" cy="12.500" r="2.200" fill="none" stroke="#3050b0" strokeWidth="1.500" /></>,
  copy: <><path d="M1 2h6l3 2v8H1z" fill="#eaf1fd" stroke="#3c5a9c" /><path d="M6 5h6l3 2.500V15H6z" fill="#eaf1fd" stroke="#3c5a9c" /><path d="M8 9h5M8 11h5M8 13h5M3 5h3M3 7h2M3 9h2" stroke="#5f82c8" /></>,
  paste: <><rect x="1" y="2" width="11" height="13" rx="1" fill="#dba741" stroke="#7e5b1c" /><rect x="4" y=".5" width="5" height="3.500" fill="#c9cdd6" stroke="#555" /><path d="M7 6h5l3 3v6.500H7z" fill="#eef3fd" stroke="#3c5a9c" /><path d="M9 10h4M9 12h4" stroke="#5f82c8" /></>,
  del: <path d="M2.500 2l11 12.500M13.500 1.500L2.500 14.500" stroke="#333" strokeWidth="1.900" fill="none" />,
  undo: <path d="M7 14.500q6-2 5.500-6.500Q12 3.500 8 3.500L3.500 7M3 2v5.500h5.500" fill="none" stroke="#3e6fd0" strokeWidth="2.200" />,
  redo: <path d="M9 14.500q-5.500-2-5-6.500Q4.500 4 8 4l4 3M12.500 2.500v5H7.500" fill="none" stroke="#b3b3b3" strokeWidth="2.200" />,
  props: <><rect x="1" y="6" width="12" height="9" fill="#fafafa" stroke="#555" /><path d="M3 9.500h2M7 9.500h4M3 12.500h2M7 12.500h4" stroke="#666" /><path d="M5 6l5-4.500 5 .5v4l-4 1.500z" fill="#e6c238" stroke="#7b6513" /></>,
  help: <><path d="M1 7l7-6 7 5-6 6z" fill="#8d7cc9" stroke="#4e3f8a" /><path d="M1 7v3l8 5v-3z" fill="#c9c0ea" stroke="#4e3f8a" /><circle cx="11" cy="11" r="4" fill="#5d7fd8" stroke="#fff" /><text x="9" y="14" fontSize="8" fontWeight="700" fill="#fff">?</text></>,
  book: <><rect x="1.500" y="2" width="12" height="13" fill="#2f9a63" stroke="#175a37" /><path d="M4 2v13" stroke="#b4e0c6" /><rect x="6" y="5" width="5" height="3" fill="#d5efe0" /><path d="M12.500 0v6M9.500 3h6M10.500 1l4 4M14.500 1l-4 4" stroke="#f3c62e" /></>,
  pasteSc: <><rect x="1" y="2" width="11" height="13" rx="1" fill="#d39b3c" stroke="#6e4f18" /><rect x="4" y=".5" width="5" height="3.500" fill="#c9cdd6" stroke="#555" /><rect x="7" y="7" width="8.500" height="8.500" fill="#eef3fd" stroke="#234" /><path d="M9 14q0-4 4-4M11 8.500l2.500 1.500L12 12" stroke="#1f3ecb" fill="none" strokeWidth="1.300" /></>,
  find: <><path d="M1 5l5-4h7v7l-5 4H1z" fill="#f3c94e" stroke="#8a681a" /><path d="M5 9h4v6H4zM11 9h4l.5 6H11z" fill="#27397c" /><path d="M8 9h4v3H8z" fill="#7e90c8" /></>,
  refresh: <>{winFrame}<path d="M5 9a3 3 0 0 1 5-2M11 9a3 3 0 0 1-5 2.500M10.500 4.500V7.500H8M5.500 14v-3H8" stroke="#1f9a30" strokeWidth="1.500" fill="none" /></>,
  check: <><path d="M2 1h8l3 3v11H2z" fill="#d9e9fb" stroke="#4a78b8" /><path d="M6 8.500l3.500 4L14.500 5" stroke="#d42a20" strokeWidth="2" fill="none" /></>,
  shadow: <><rect x="4" y="5" width="11.500" height="10" fill="#22397f" /><rect x="1.500" y="1.500" width="10.500" height="11" fill="#f5f9ff" stroke="#2f60b8" /></>,
  tsym: <><rect x=".5" y=".5" width="15" height="15" fill="#dfe9fb" stroke="#1c3eb0" strokeWidth="1.500" /><path d="M3 3.500h10v3M3 3.500v3M8 3.500v9M5 12.500h6" stroke="#1fa83a" strokeWidth="2.600" fill="none" /><path d="M4 9.500h-3m11 0h3" stroke="#1c3eb0" strokeWidth="1.500" /></>,
  brush: <><path d="M14.500 1L7 9" stroke="#d79a2a" strokeWidth="2.400" /><path d="M7.500 8L5 10.500 2 15l5-2.500L9 10z" fill="#c8281e" /></>,
  fill: <><path d="M2 8l5-5 5 5-5 5.500z" fill="#e9edf3" stroke="#445" /><path d="M7 1v5" stroke="#445" /><path d="M2 8h9l-4 5z" fill="#888e9b" /><path d="M12 6q3 2 2.500 8" stroke="#2ba13b" strokeWidth="2" fill="none" /><path d="M10.500 5q2 0 3 2" stroke="#d33" strokeWidth="1.500" fill="none" /></>,
  font: <text x="1" y="14.500" fontSize="18" fontWeight="700" fontFamily="Liberation Serif" fill="#27ac38" stroke="#188226" strokeWidth=".8">A</text>,
  upFolder: <><path d="M1 14V5h4l1 1h9v8z" fill="#e9e9e9" stroke="#9a9a9a" /><path d="M6 12q5 0 4-8M7 6l3-3 3 3" fill="none" stroke="#9a9a9a" strokeWidth="1.500" /></>,
  back: <><path d="M6 3h9v7H6z" fill="#f2f2f2" stroke="#aaa" /><path d="M8 5.500h5M8 7.500h5" stroke="#bbb" /><path d="M6 7v2h5v3H6v2L1 10.500z" fill="#dcdcdc" stroke="#999" /></>,
  fwd: <><path d="M1 3h9v7H1z" fill="#f2f2f2" stroke="#aaa" /><path d="M3 5.500h5M3 7.500h5" stroke="#bbb" /><path d="M10 7v2H5v3h5v2l5-3.500z" fill="#dcdcdc" stroke="#999" /></>,
  w1: <>{winFrame}<path d="M4 6h3v2H4zM9 6h3v2H9zM6.500 11h3v2h-3zM5.500 8l2.500 3 2.500-3" stroke="#1d40c8" fill="none" strokeWidth="1.200" /></>,
  w2: <>{winFrame}<path d="M3 6h4v3H3zM7 8h4v4H7zM11 6h2v7H6" stroke="#1d40c8" fill="none" strokeWidth="1.200" /></>,
  w3: <>{winFrame}<path d="M5 5.500h4l2 2V13H5z" fill="#fff" stroke="#38507e" /></>,
  w4: <>{winFrame}<path d="M2.500 5.500h3l1.500 2V13H2.500zM9 5.500h3l1.500 2V13H9z" fill="#fff" stroke="#38507e" /></>,
  w5: <>{winFrame}<path d="M4 6h3v2H4zM10 6h3v2h-3zM5.500 8l2.500 3 2.500-3" stroke="#1d40c8" fill="none" strokeWidth="1.200" /><path d="M6 8v2.500h4v3H6V16L.5 12z" fill="#35b54a" stroke="#166e27" strokeWidth=".8" /></>,
  w6: <><rect x=".5" y="1.500" width="15" height="13" fill="#f3f3f3" stroke="#aaa" /><path d="M1 3h14" stroke="#bbb" strokeWidth="2" /><path d="M3 6h3v2H3zM9 6h3v2H9zM4.500 8l3 3 3-3" stroke="#999" fill="none" /><path d="M9 8v2.500H6v3h3V16l6-4z" fill="#ccc" stroke="#999" strokeWidth=".8" /></>,
  w7: <>{winFrame}<path d="M3 15V6h5" stroke="#38507e" fill="none" /><circle cx="9" cy="8.500" r="3.700" fill="#d9e9fa" stroke="#5b7297" strokeWidth="1.400" /><path d="M12 11.500l3.500 3.500" stroke="#c98425" strokeWidth="2.500" /></>,
  w8: <><path d="M1 1.500h14v10H7v3H1z" fill="#fbfcff" stroke="#556b94" /><path d="M3.500 4.500h9M3.500 6.500h9M3.500 8.500h6" stroke="#7c90b8" /></>,
  w9: <><rect x=".5" y="1.500" width="15" height="10" fill="#fff" stroke="#555e70" /><path d="M1 6.500h14M1 9h14M5.500 2v9M10.500 2v9" stroke="#7182a5" /><path d="M1 3h14" stroke="#8a93a5" strokeWidth="2" /><path d="M7 12v3H1v-3" fill="#eee" stroke="#667" /></>,
  /* toolbox */
  ptr: <><path d="M1 1l12 5-4 2 6 6-2 2-6-6-2 4z" fill="#8f979e" stroke="#565d66" /></>,
  hand: <><path d="M4 12.500L1 8.500l1-1.200 2 1.500V3h1.500v4L6 1.500h1.700L8 6.500 8.500 1h1.700v6L11.500 2.500 13 3v6.500l-1.500 3z" fill="#fff" stroke="#222" strokeWidth=".8" /><path d="M3.500 12.500h9v3h-7q-2-1-2-3z" fill="#1543c8" /></>,
  zin: <><circle cx="6.500" cy="6.500" r="5" fill="#dfeefc" stroke="#6c7c90" strokeWidth="1.300" /><path d="M4 6.500h5M6.500 4v5" stroke="#27397c" strokeWidth="1.500" /><path d="M10.500 10.500l4.500 4.500" stroke="#c79a34" strokeWidth="2.600" /></>,
  zout: <><circle cx="6.500" cy="6.500" r="5" fill="#dfeefc" stroke="#6c7c90" strokeWidth="1.300" /><path d="M4 6.500h5" stroke="#27397c" strokeWidth="1.500" /><path d="M10.500 10.500l4.500 4.500" stroke="#c79a34" strokeWidth="2.600" /></>,
  zfit: <><circle cx="6.500" cy="6.500" r="5" fill="#dfeefc" stroke="#6c7c90" strokeWidth="1.300" /><path d="M4 4.500h5v4H4zM4 6.500h5" stroke="#2a52d0" fill="none" /><path d="M10.500 10.500l4.500 4.500" stroke="#c79a34" strokeWidth="2.600" /></>,
  scis: <><path d="M4 0l5 10M11.500 0L6.500 10" stroke="#2f86c8" strokeWidth="1.800" /><circle cx="4" cy="12.500" r="2.500" fill="none" stroke="#dc3a28" strokeWidth="1.600" /><circle cx="11.500" cy="12.500" r="2.500" fill="none" stroke="#dc3a28" strokeWidth="1.600" /></>,
  note: <><path d="M1.500 3h10l3 3v9h-13z" fill="#fdf5d4" stroke="#3349a8" /><path d="M3.500 7h8M3.500 9.500h9M3.500 12h9" stroke="#d5a21a" strokeWidth="1.300" /></>,
  link: <><rect x="1" y="10" width="4.500" height="4.500" fill="#fff" stroke="#3349a8" /><rect x="10.500" y="2" width="4.500" height="4.500" fill="#fff" stroke="#3349a8" /><path d="M5.500 10l2-2M8.500 7l2-1.500M8 6h2.500v2.500" stroke="#223" fill="none" /></>,
  pkg: <><path d="M1 3h5l1 1.500h8V15H1z" fill="#f0be4a" stroke="#8a6117" /><path d="M3 6.500h3v3H3zM9.500 6h3v3h-3zM6.500 11h3v3h-3z" fill="#1d40c8" stroke="#fff" strokeWidth=".6" /></>,
  actor: <g stroke="#2c74c0" strokeWidth="1.200" fill="none"><circle cx="7" cy="3" r="2" fill="#e6f4ff" /><path d="M7 5v5M3 7h8M7 10L3.500 15M7 10l3.500 5" /></g>,
  ucase: <ellipse cx="7.500" cy="8.500" rx="7" ry="5" fill="#9bdcf8" stroke="#2d83c6" />,
  gen: <><path d="M4.500 1h7v4h-7zM1 11h5v4H1zM10 11h5v4h-5zM3.500 11l4.500-5 4.500 5M1 13h5M10 13h5M4.500 3h7" fill="none" stroke={N} /></>,
  assoc: <><g stroke="#5f9ad0" fill="none"><circle cx="4" cy="3" r="1.600" /><path d="M4 4.500v4M1 6h6M4 8.500L1.500 13M4 8.500L6.500 13" /></g><ellipse cx="11.500" cy="12.500" rx="4" ry="2.600" fill="#9bdcf8" stroke="#4f8fcc" /><path d="M8 3h4v4M10.500 5.500L12 7.500l1.500-2" stroke="#333" fill="none" /></>,
  dep: <><path d="M1 1h6v5H1zM1 3h6M9 9h6v5H9zM9 11h6M4 6v6h5M2.500 8L4 6.200 5.500 8" fill="none" stroke={N} strokeWidth="1.200" /></>,
  file: <><path d="M2.500 1.500h8l3 3V15h-11z" fill="#f4f7fc" stroke="#5b6a82" /><path d="M5 5h3v3H5zM9.500 5.500h2M9.500 7.500h2M5 10h7M5 12.500h7" stroke="#7d8ba5" fill="none" /></>,
};
const shape = (d: string) => <path d={d} fill="url(#shapeG)" stroke="#3044a8" strokeLinejoin="round" />;
Object.assign(icons, {
  f1: <><rect x="1" y="4" width="14" height="9" rx="4" fill="#b3c4ec" stroke="#3044a8" /><path d="M2 7h12M2 9h12M3 11h10" stroke="#3b54b8" /></>,
  f2: <><rect x="1" y="3.500" width="14" height="10" fill="url(#shapeG)" stroke="#6a83c4" /><path d="M5 6h6M8 6v6" stroke="#27397c" strokeWidth="1.800" /></>,
  f3: <path d="M3 3l10 10.500" stroke="#34406e" strokeWidth="1.200" />,
  f4: <path d="M1 2.500q9-1 13.500 11" fill="none" stroke="#34406e" strokeWidth="1.200" />,
  f5: <rect x="1" y="3.500" width="14" height="10" fill="url(#shapeG)" stroke="#5d79c0" />,
  f6: <ellipse cx="8" cy="8.500" rx="7" ry="5" fill="url(#shapeG)" stroke="#5d79c0" />,
  f7: <rect x="1" y="3.500" width="14" height="10" rx="3.500" fill="url(#shapeG)" stroke="#5d79c0" />,
  f8: <path d="M1 13l5-6 3 4 6-8M1 13l4-2" fill="none" stroke="#34406e" strokeWidth="1.200" />,
  f9: <path d="M1.500 14V8L6 3h5q3 2 0 5 4 0 3.500 6z" fill="url(#shapeG)" stroke="#34509a" />,
  p1: shape("M4 3.500h8l3 2.500v5l-3 2.500H4L1 11V6z"), p2: shape("M8 2.500l7 11H1z"), p3: shape("M3 2.500l10 11H3z"), p4: shape("M4 4h11.500l-3.500 9.500H.5z"),
  p5: shape("M.5 4h15l-2.500 9.500H3z"), p6: shape("M8 1.500l6.500 7L8 15.500 1.500 8.500z"), p7: shape("M8 2l7 5.500-3 6.500H4L1 7.500z"), p8: shape("M4.500 4h7L15.500 8.500 11.500 13h-7L.5 8.500z"),
  p9: shape("M5.500 2h5L14 5.500v5L10.500 14h-5L2 10.500v-5z"), p10: shape("M8 1.500l2 5h5l-4 3.500 1.500 5L8 12l-4.500 3L5 10 1 6.500h5z"), p11: shape("M8 1l2 4h5l-2.500 3.500L15 12h-5l-2 4-2-4H1l2.500-3.500L1 5h5z"),
  p12: shape("M.5 5.500l15-3v11H.5z"), p13: shape("M5.500 3H15v11H1V7.500z"), p14: shape("M2.500 2h11v8L8 15.500 2.500 10z"),
  p15: <>{shape("M.5 3.500h15v10H.5z")}<path d="M3.500 3.500v10M12.500 3.500v10" stroke="#3044a8" /></>,
  p16: <>{shape("M.5 3.500h15v10H.5z")}<path d="M.5 6h15M4 3.500v10" stroke="#3044a8" /></>,
  p17: shape("M1.500 14V5.500l1-1.500h5l1 2h6V14z"), p18: <>{shape("M2 1.500h8l4 4v9.500H2z")}<path d="M10 1.500v4h4" fill="none" stroke="#3044a8" /></>,
  p19: shape("M1 3.500h14v8q-4-1.500-7 1-4 2-7 0z"), p20: <>{shape("M5 1.500h10.500v8H5z")}{shape("M3 3.500h10.500v8H3z")}{shape("M.5 6h10.500v7q-3 0-5 1.500-3 1-5.500 0z")}</>,
  p21: <>{shape("M4 1.500h11.500V12H4z")}{shape("M2 3.500h11V14H2z")}{shape("M.5 5H11v9.500H.5z")}</>, p22: <>{shape("M5 2h10.500v8H5z")}{shape("M3 4h10.500v8H3z")}{shape("M.5 6H11v8H.5z")}</>,
  p23: <><path d="M2.500 3.500v10q5.500 3.500 11 0v-10" fill="url(#cylG)" stroke="#555" /><ellipse cx="8" cy="3.500" rx="5.500" ry="2" fill="#ddd" stroke="#555" /></>,
  p24: <g fill="#2c40b4"><circle cx="8" cy="2.500" r="2" /><path d="M4 5h8v5h-1.200V7h-.8v8.500H8.500V10h-1v5.500H6V7h-.8v3H4z" /></g>,
  p25: <g fill="#2c40b4"><circle cx="8" cy="2.500" r="2" /><path d="M5.500 5h5l2.500 4-1 .8L10 7.500l1.500 4.500H9.500v3.500h-1V12h-1v3.500h-1V12h-2L6 7.500 4 9.800 3 9z" /></g>,
  p26: <>{shape("M5 2h10.500v9H5z")}{shape("M.5 4.500h11v9.500H.5z")}</>, p27: shape("M1 4h9.500l5 4.500-5 4.500H1l4.500-4.500z"),
  p28: <><circle cx="10" cy="8.500" r="5" fill="url(#shapeG)" stroke="#3044a8" /><path d="M.5 5v7M.5 8.500H5" stroke="#3044a8" strokeWidth="1.300" /></>,
  p29: <><circle cx="8" cy="7" r="5.300" fill="url(#shapeG)" stroke="#3044a8" /><path d="M3 14.500h10" stroke="#3044a8" strokeWidth="1.500" /></>,
  p30: <><circle cx="8" cy="9.500" r="5.300" fill="url(#shapeG)" stroke="#3044a8" /><path d="M10.500 1L7.500 4.200l3.500 2" fill="none" stroke="#3044a8" strokeWidth="1.300" /></>,
  p31: <>{shape("M.5 3.500h15v10.500H.5z")}<path d="M.5 3.500L8 9.500l7.500-6" fill="none" stroke="#3044a8" /></>,
  p32: <>{shape("M.5 3.500h15v10.500H.5z")}<path d="M5 4L1 8.500 5 14h6l4-5.500L11 4z" fill="none" stroke="#3044a8" /></>,
  p33: <>{shape("M.5 3.500h15v10.500H.5z")}<path d="M6 4L1.500 8.500 6 14" fill="none" stroke="#3044a8" /></>,
  g1: <><path d="M3 0l2 2 2-2" fill="none" stroke="#777" /><g fill="#5f7fc8"><path d="M2 4h3v3H2zM7 4h3v3H7zM12 4h3v3h-3zM2 8.500h3v3H2zM7 8.500h3v3H7zM12 8.500h3v3h-3zM2 13h3v3H2zM7 13h3v3H7zM12 13h3v3h-3z" /></g><g fill="#d58ab0"><path d="M3 5h1v1H3zM8 5h1v1H8zM13 5h1v1h-1zM3 9.500h1v1H3zM8 9.500h1v1H8zM13 9.500h1v1h-1zM3 14h1v1H3zM8 14h1v1H8zM13 14h1v1h-1z" /></g></>,
  g2: <><path d="M1 0l2 2 2-2" fill="none" stroke="#777" /><path d="M1 4h3v3H1zM1 8.500h3v3H1zM1 13h3v3H1z" fill="#5f7fc8" /><path d="M2 5h1v1H2zM2 9.500h1v1H2zM2 14h1v1H2z" fill="#d58ab0" /><path d="M6 5.500h10M6 10h10M6 14.500h10" stroke="#777" strokeDasharray="2 1" /></>,
});
const Ico = ({ n, s = 16 }: { n: string; s?: number }) => <svg width={s} height={s} viewBox="0 0 16 16">{icons[n]}</svg>;

const bar1 = ["new", "project", "open", "save", "saveall", "preview", "print", "cut", "copy", "paste", "del", "undo", "redo", "props", "help"];
const bar2 = ["book", "pasteSc", "find", "refresh", "check", "shadow", "tsym", "brush", "fill", "font", "upFolder", "back", "fwd"];
const bar3 = ["w1", "w2", "w3", "w4", "w5", "w6", "w7", "w8", "w9"];
const bar4 = ["preview", "print"];
const BarSet = ({ w, items, on = [] }: { w: number; items: string[]; on?: string[] }) => (
  <Bar $w={w}>
    {items.map((i) => <Tool key={i} $on={on.includes(i)}><Ico n={i} /></Tool>)}
    <BarEnd><svg width="7" height="7" viewBox="0 0 7 7"><path d="M0 1h7M0 3h7L3.500 6.500z" fill="#fff" stroke="#fff" strokeWidth=".8" /></svg></BarEnd>
  </Bar>
);

const menu: [string, number][] = [["File", 18], ["Edit", 20], ["View", 25], ["Model", 34], ["Symbol", 39], ["Language", 52], ["Report", 36], ["Repository", 57], ["Tools", 28], ["Window", 44], ["Help", 25]];

const sections: { t: string; w: number; items: string[]; on?: string }[] = [
  { t: "Standard", w: 48, items: ["ptr", "hand", "zin", "zout", "zfit", "props", "scis", "note", "link"], on: "ptr" },
  { t: "Use Case Diagram", w: 96, items: ["pkg", "actor", "ucase", "gen", "assoc", "dep", "file"] },
  { t: "Free Symbols", w: 70, items: ["f1", "f2", "f3", "f4", "f5", "f6", "f7", "f8", "f9"] },
  { t: "Predefined Symbols", w: 106, items: Array.from({ length: 33 }, (_, i) => "p" + (i + 1)) },
];

const DTab = ({ w, pl, ml, t, tw, on }: { w: number; pl: number; ml: number; t: string; tw: number; on?: boolean }) => (
  <TabBox $w={w} $pl={pl} $ml={ml} $on={on}>
    <TabShape width={w} height="21" viewBox={`0 0 ${w} 21`}>
      <path d={`M.5 21Q4 19 6 14L11 4Q12.500.5 16 .5H${w - 2}Q${w - 0.5} .5 ${w - 0.5} 2V21`} fill={on ? "url(#tabOn)" : "url(#tabOff)"} stroke={on ? "#aac0e0" : "#8a98a8"} />
    </TabShape>
    <Fit w={tw}>{t}</Fit>
  </TabBox>
);
const STab = ({ w, pl, ml, t, tw, on }: { w: number; pl: number; ml: number; t: string; tw: number; on?: boolean }) => (
  <SheetTab $w={w} $pl={pl} $ml={ml} $on={on}>
    <SheetShape width={w} height="17" viewBox={`0 0 ${w} 17`}>
      <path d={`M.5 0L7 16.500H${w - 7}L${w - 0.5} 0z`} fill={on ? "#fff" : "#ececec"} />
      <path d={`M.5 0L7 16.500M${w - 7} 16.500L${w - 0.5} 0${on ? "" : `M0 .5H${w}`}`} stroke="#444" />
    </SheetShape>
    <Fit w={tw}>{t}</Fit>
  </SheetTab>
);

/* ---------- use case diagram ---------- */
const cases: [number, number, number, string, number][] = [
  [909, 213.5, 56.5, "View trainigs list", 78],
  [1122, 213.5, 64.5, "Participate training", 90],
  [903.8, 323.5, 47.5, "View tests list", 65],
  [1121.8, 328.5, 47.5, "Pass test", 43],
  [907, 439, 59.5, "View list of books", 83],
  [1193.8, 501.3, 52.6, "Pay via PayPal", 71.5],
  [938, 571.3, 47.5, "Order book", 52.5],
  [1150, 599.5, 47.5, "Pay by CC", 49],
  [918, 685.5, 47.5, "View news", 50],
  [1129, 689.3, 72.3, "Read/write comments", 102],
];
const Actor = ({ x, y }: { x: number; y: number }) => (
  <g stroke="#0080ff" fill="none">
    <circle cx={x} cy={y} r="8" fill="url(#headG)" strokeWidth="1.800" />
    <path d={`M${x} ${y + 8}v16M${x - 16} ${y + 16}h32M${x} ${y + 24}l-16 15.500M${x} ${y + 24}l16 15.500`} strokeWidth="2.800" />
  </g>
);
function UseCases() {
  return (
    <svg width="1014" height="707" viewBox="628 105 1014 707" fontFamily={ARIAL} fontSize="10.4" fill="#000">
      <defs>
        <linearGradient id="ucG" x1="0" y1="0" x2="1" y2="1"><stop offset=".1" stopColor="#fdffff" /><stop offset=".85" stopColor="#c2ffff" /></linearGradient>
        <linearGradient id="headG" x1="0" y1="0" x2="1" y2="1"><stop offset="0" stopColor="#fff" /><stop offset="1" stopColor="#ffffb8" /></linearGradient>
      </defs>
      <path d="M779.500 105v707M1463.500 105v707" stroke="#000" strokeWidth="1.200" />
      <g fill="none" stroke="#2020f0" strokeWidth="1">
        <path d="M764.500 272.400L832.700 232.400M771.200 287.500L849.500 317.300M759.800 307.500L833.500 401.400" />
        <path d="M708.500 334.500H743.400L724 355.700L711 334.500M723.600 355.700L719.400 548.800" />
        <path d="M732.500 573.700L1131.500 471.600L1130.600 372.400" />
        <path d="M759.800 585.500L878.500 573.700M753.500 604.300L854.500 672.400" />
        <path d="M719.400 653.300L785 726.300L1024.600 760.400L1244.700 758.600L1275.400 488.800L1265.300 237.300L1188.300 219.400" />
      </g>
      <g fill="none" stroke="#8585ff">
        <g strokeDasharray="19 5">
          <path d="M1057 213.500H966M1073 323.500H952M907.500 542V475M938.500 535V501.500H1141M970 599.500H1102M966 687.500H1056" />
        </g>
        <path d="M980 209.800L966.500 213.500L980 217.200M966 319.800L952.500 323.500L966 327.200M903.800 489L907.500 475.500L911.200 489M1127 497.800L1140.500 501.500L1127 505.200M1088.500 595.800L1102 599.500L1088.500 603.200M1042.500 683.800L1056 687.500L1042.500 691.200" />
      </g>
      <rect x="896" y="504" width="22" height="11" fill="#fff" />
      {cases.map(([x, y, r, t, w]) => (
        <g key={t}>
          <ellipse cx={x} cy={y} rx={r} ry="35.800" fill="url(#ucG)" stroke="#0080ff" strokeWidth="1.900" />
          <text x={x - w / 2} y={y + 3.5} textLength={w}>{t}</text>
        </g>
      ))}
      <Actor x={717.4} y={267.5} />
      <Actor x={715.4} y={579.500} />
      <text x="706.800" y="319.800" textLength="21.500">User</text>
      <text x="679.500" y="632.300" textLength="74">Authorized user</text>
      <text x="984.300" y="209.200" textLength="56">{"<<extend>>"}</text>
      <text x="984.700" y="319" textLength="56">{"<<extend>>"}</text>
      <text x="878.700" y="513" textLength="56">{"<<extend>>"}</text>
      <text x="1005.700" y="595" textLength="59">{"<<include>>"}</text>
      <text x="981.700" y="683" textLength="59">{"<<include>>"}</text>
      <g>
        {[1141, 1247].map((x) => [465, 538].map((y) => <rect key={x + "-" + y} x={x - 3} y={y - 3} width="6" height="6" />))}
        <rect x="1191" y="462" width="6" height="6" /><rect x="1191" y="535" width="6" height="6" /><rect x="1138" y="498" width="6" height="6" /><rect x="1244" y="498" width="6" height="6" />
        <g fill="#ff7f00"><rect x="1191" y="464" width="6" height="2.500" /><rect x="1191" y="536" width="6" height="2.500" /><rect x="1140" y="498.500" width="2" height="5" /><rect x="1245.500" y="498.500" width="2" height="5" /></g>
      </g>
    </svg>
  );
}

/* =================== Taskbar =================== */
const Taskbar = styled.div`
  width: 61px;
  height: 1080px;
  flex: none;
  background: linear-gradient(#8093aa, #8495ab 62px, #a7c0dd 96px, #a7c0dd 885px, #8094ab 925px, #8597ad 1080px);
  border-left: 1px solid #6f839c;
  display: flex;
  flex-direction: column;
`;
const Orb = styled.div`
  height: 57px;
  padding-top: 9px;
  display: flex;
  justify-content: center;
  flex: none;
`;
const Launch = styled.div`
  height: 38px;
  display: flex;
  align-items: center;
  justify-content: center;
  flex: none;
`;
const TaskList = styled.div`
  display: flex;
  flex-direction: column;
  gap: 3px;
`;
const Task = styled.div<{ $k?: "plain" | "green" | "active" }>`
  height: 29px;
  display: flex;
  align-items: center;
  justify-content: center;
  padding-bottom: 1px;
  ${(p) =>
    p.$k !== "plain" &&
    css`
      border: 1px solid #4d5c70;
      border-radius: 3px;
      box-shadow: inset 0 0 0 1px rgba(255, 255, 255, 0.6);
      background: ${p.$k === "active" ? "linear-gradient(160deg, #eef3f9, #cfdced)" : "linear-gradient(165deg, #c9d6e8 0%, #bccce2 45%, #a9bfdc 50%, #b2c8e4)"};
    `}
  ${(p) =>
    p.$k === "green" &&
    css`
      width: 53px;
      background: linear-gradient(165deg, #6fae68, #3f9f34 45%, #2fbf25 60%, #3fe02a);
      border-right: 5px solid #b6c8de;
      box-shadow: inset 0 0 0 1px rgba(180, 255, 180, 0.6), 2px 0 0 #55667d, 4px 0 0 #b6c8de, 5px 0 0 #55667d;
    `}
`;
const Tray = styled.div`
  margin-top: auto;
  height: 150px;
  display: flex;
  flex-direction: column;
  align-items: center;
  color: #fff;
  font-size: 12px;
  line-height: 17px;
`;
const TrayRow = styled.div<{ $h: number; $gap?: number; $left?: boolean }>`
  height: ${(p) => p.$h}px;
  width: 100%;
  display: flex;
  align-items: center;
  justify-content: ${(p) => (p.$left ? "flex-start" : "center")};
  padding: 0 5px 0 ${(p) => (p.$left ? 7 : 0)}px;
  gap: ${(p) => p.$gap || 0}px;
`;
const ShowDesk = styled.div`
  height: 14px;
  width: 60px;
  margin-top: 2px;
  border: 1px solid #4c5a6c;
  box-shadow: inset 0 0 0 1px rgba(255, 255, 255, 0.35);
  background: linear-gradient(110deg, #66788f 40%, #8fa0b5);
  flex: none;
`;

const chrome = <><circle cx="8" cy="8" r="7" fill="#fbcc34" /><path d="M8 8L1.800 4.600A7 7 0 0 1 14.200 4.600z" fill="#e23c2e" /><path d="M8 8L1.800 4.600A7 7 0 0 0 7.500 15L11 9.500z" fill="#3aa757" /><circle cx="8" cy="8" r="3.300" fill="#fff" /><circle cx="8" cy="8" r="2.500" fill="#4285f4" /></>;
const taskIcons: { k?: "plain" | "green" | "active"; i: React.ReactNode }[] = [
  { k: "green", i: <><path d="M1 3h5l1 1.500h8V14H1z" fill="#f2d679" stroke="#b08c35" strokeWidth=".7" /><path d="M2 6h12v7H2z" fill="#fdeeb0" /><path d="M3 15v-4q0-2 2-2h6q2 0 2 2v4h-3v-3H6v3z" fill="#6cb7e8" stroke="#3a81b8" strokeWidth=".6" /></> },
  { i: chrome },
  { i: <>{chrome}<rect x="8.500" y="8.500" width="7" height="7" rx="1" fill="#6d9be8" /><circle cx="12" cy="11" r="1.300" fill="#234a9c" /><path d="M9.800 15q0-2.500 2.200-2.500t2.200 2.500z" fill="#234a9c" /></> },
  { i: <><rect x="7" y="3.500" width="8.500" height="9" fill="#fff" stroke="#0a6cc0" /><path d="M8 6.500l3 3 4-5" stroke="#0a6cc0" fill="none" strokeWidth="1.200" /><path d="M0 2l9-1.500v15L0 14z" fill="#0a6cc0" /><text x="1.200" y="11.200" fontSize="9" fontWeight="700" fill="#fff">O</text></> },
  { i: <><path d="M1 1h13l1.500 1.500V15H1z" fill="#1d34c0" stroke="#0c1a70" /><rect x="4" y="1" width="8" height="5" fill="#c9cfe0" /><rect x="9" y="1.500" width="2" height="4" fill="#1d34c0" /><rect x="3" y="8" width="10.500" height="7" fill="#fff" /><path d="M4 10h8.500M4 12.500h8.500" stroke="#d43232" strokeWidth="1.200" /></> },
  { k: "plain", i: <><rect x="0" y="1" width="16" height="13" fill="#0a10a0" stroke="#1ad0e8" /><path d="M8 1v13" stroke="#1ad0e8" strokeWidth="1.500" /><path d="M2 4h4M2 6.500h4M10 4h4M10 6.500h4" stroke="#ffe93a" /><path d="M2 9h4M10 9h4" stroke="#1ad0e8" /><path d="M0 15.500h16" stroke="#111" strokeDasharray="2 1" /></> },
  { i: <><rect x="1" y="1" width="14" height="14" rx="1.500" fill="#4a4a4a" stroke="#777" /><rect x="1" y="1" width="14" height="9" fill="#383838" /><text x="5" y="10" fontSize="9.500" fontWeight="700" fill="#f39a2d">S</text><path d="M2 12.500h12" stroke="#999" strokeWidth="1.500" /></> },
  { k: "plain", i: <><circle cx="8" cy="8" r="6.800" fill="#f5a11c" stroke="#2a2418" strokeWidth="1.500" /><path d="M8 4l4 7H4z" fill="none" stroke="#2a1c08" strokeWidth="1.500" /></> },
  { i: <><path d="M1 12q1-7 7-7t7 7z" fill="#9fc04e" /><path d="M3.500 3l2 3M12.500 3l-2 3" stroke="#9fc04e" /><circle cx="5" cy="9" r=".8" fill="#fff" /><circle cx="11" cy="9" r=".8" fill="#fff" /></> },
  { i: <><circle cx="8" cy="8" r="7" fill="#c4d3e2" stroke="#7d93aa" strokeWidth=".8" /><circle cx="8" cy="7.500" r="5.500" fill="#12609c" stroke="#0b3a63" /><path d="M4 7h8M8 4v7M5.500 5l5 5" stroke="#8fe3e6" strokeWidth="1.200" /></> },
  { i: <><path d="M1 3l6-2 2 7-6 2z" fill="#9ddc8e" stroke="#6ea864" strokeWidth=".6" /><path d="M4 5l6-1 1 7-6 1z" fill="#b8dcf6" stroke="#7da6c8" strokeWidth=".6" /><path d="M8 7l7 1-1 7-7-1z" fill="#fbe66a" stroke="#c8ac30" strokeWidth=".6" /></> },
  { i: <><path d="M0 2l9-1.500v15L0 14z" fill="#0a6cb8" /><text x="2" y="11.500" fontSize="10" fontWeight="700" fill="#fff">L</text><path d="M10 3q5 0 5.500 5t-5.500 4l-1 2M10 6q3 0 3 3" fill="none" stroke="#1583d6" strokeWidth="1.500" /></> },
  { i: <><circle cx="8" cy="8" r="6.500" fill="#13a9e8" /><circle cx="4" cy="4" r="3.500" fill="#13a9e8" /><circle cx="12" cy="12" r="3.500" fill="#13a9e8" /><text x="4.500" y="12" fontSize="11" fontWeight="700" fill="#fff">S</text></> },
  { i: <><rect x="0" y="2" width="16" height="13" fill="#0a0a0a" stroke="#999" /><rect x="0" y="1.500" width="16" height="2.500" fill="#d6d6d6" /><text x="1" y="11.500" fontSize="6" textLength="13" fontFamily="Liberation Mono" fontWeight="700" fill="#fff">C:\_</text></> },
  { i: <><rect x="7" y="2.500" width="8.500" height="11" fill="#fff" stroke="#d24726" /><path d="M10 5h4v4M10 11h4" stroke="#d24726" fill="none" strokeWidth="1.300" /><path d="M0 2l9-1.500v15L0 14z" fill="#d24726" /><text x="2" y="11.500" fontSize="9.500" fontWeight="700" fill="#fff">P</text></> },
  { k: "active", i: <><path d="M8.500 1l3.500 7.500H5z" fill="#4fb848" stroke="#2a7d2c" strokeWidth=".6" /><ellipse cx="4" cy="11" rx="3.800" ry="3.200" fill="#d8232a" stroke="#8d1015" strokeWidth=".6" /><rect x="11" y="4" width="4.500" height="9" fill="#f6d35b" stroke="#9a6b14" /></> },
  { i: <><rect x="5" y="1" width="6" height="13" rx="1" fill="#e4ebf3" stroke="#4f6482" transform="rotate(8 8 8)" /><path d="M6.500 3.500h4l-.6 4h-4z" fill="#4a86c8" /><path d="M3 14q5 2 10-1" stroke="#8fa3bb" fill="none" /></> },
];

const g = "#a6a6a6";
const lines = (o: string) => <svg width="14" height="14" viewBox="0 0 14 14"><path d={o} stroke={g} /></svg>;

export default function App() {
  return (
    <Desktop>
      <Global />
      <svg width="0" height="0" style={{ position: "absolute" }}>
        <defs>
          <linearGradient id="shapeG" x1="0" y1="0" x2="1" y2="1"><stop offset=".2" stopColor="#fff" /><stop offset="1" stopColor="#b9d0f6" /></linearGradient>
          <linearGradient id="cylG"><stop offset="0" stopColor="#777" /><stop offset=".35" stopColor="#fff" /><stop offset="1" stopColor="#555" /></linearGradient>
          <linearGradient id="tabOn" x1="0" y1="0" x2="0" y2="1"><stop offset="0" stopColor="#fff" /><stop offset="1" stopColor="#dbe6fa" /></linearGradient>
          <linearGradient id="tabOff" x1="0" y1="0" x2="0" y2="1"><stop offset="0" stopColor="#dde7f2" /><stop offset="1" stopColor="#b3c8e0" /></linearGradient>
          <linearGradient id="sideG" x1="0" y1="0" x2="0" y2="1"><stop offset="0" stopColor="#fff" /><stop offset="1" stopColor="#bcd8e6" /></linearGradient>
        </defs>
      </svg>

      <Ppt>
        <PptTitle>
          <TitleArt width="136" height="40" viewBox="0 0 136 40"><path d="M6 0h4v20H6zM13 0h3v28h-3zM19 0h8v34q-4 0-8-4zM30 0h3v20h-3zM37 0h3v24h-3zM44 0h14l-4 6h-10zM70 0h3v30h-3zM72 20l12 14V0H72zM88 0h22v38q-10 0-22-6zM112 0h10v36q-6 2-10 2zM125 0h3v36h-3zM131 0h5v30h-5z" fill="#ececec" /></TitleArt>
          <svg width="17" height="18" viewBox="0 0 17 18"><path d="M9 3h7v12H9z" fill="#fff" stroke="#d24726" /><path d="M11 6h3v3M11 12h4" stroke="#d24726" fill="none" /><path d="M0 2l10-2v18L0 16z" fill="#d24726" /><path d="M3.500 13V5h2.500q2 0 2 2.300T5.500 9.500h-2" fill="none" stroke="#fff" strokeWidth="1.500" /></svg>
          <Push $w={13} />
          <svg width="15" height="15" viewBox="0 0 15 15"><path d="M0 0h15v15H0z" fill="#7b51a8" /><path d="M3 1h9v6H3zM4 10h7v5H4z" fill="#fff" /><path d="M5.500 11h2v4h-2z" fill="#7b51a8" /></svg>
          <Push $w={14} />
          <svg width="15" height="15" viewBox="0 0 15 15"><path d="M1 5h8q5 0 5 4t-5 5M5 .5L.8 5 5 9.500" fill="none" stroke="#b4b4b4" strokeWidth="2.200" /></svg>
          <Push $w={5} /><Caret /><Push $w={13} />
          <svg width="15" height="16" viewBox="0 0 15 16"><path d="M4 4a5.800 5.800 0 1 0 5-1.500M9.500 0l-1 3.500L13 4.500" fill="none" stroke="#3c76b8" strokeWidth="2.400" /></svg>
          <Push $w={14} />
          <svg width="17" height="16" viewBox="0 0 17 16"><path d="M0 1h15M2 1v9h4M5 15l3-3" stroke="#666" fill="none" /><circle cx="10.500" cy="8" r="4.500" fill="#fff" stroke="#666" /><path d="M9 5.500v5l4-2.500z" fill="#3a9a62" /><path d="M5 15h6" stroke="#666" /></svg>
          <Push $w={12} />
          <svg width="6" height="7" viewBox="0 0 6 7"><path d="M0 .5h6" stroke="#555" /><path d="M0 3h6L3 6.500z" fill="#555" /></svg>
          <PptCaption><Fit w={277}>UML_For Developers.pptx [Read-Only] - PowerPoint</Fit></PptCaption>
        </PptTitle>
        <PptTabs>
          <FileTab><Fit w={21}>FILE</Fit></FileTab>
          <PptTab $ml={4} $active><Fit w={35}>HOME</Fit></PptTab>
          <PptTab $ml={15}><Fit w={38}>INSERT</Fit></PptTab>
          <PptTab $ml={29}><Fit w={40}>DESIGN</Fit></PptTab>
          <PptTab $ml={29}><Fit w={74}>TRANSITIONS</Fit></PptTab>
          <PptTab $ml={29}><Fit w={73}>ANIMATIONS</Fit></PptTab>
          <PptTab $ml={29}><Fit w={67}>SLIDE SHOW</Fit></PptTab>
          <PptTab $ml={29}><Fit w={42}>REVIEW</Fit></PptTab>
        </PptTabs>
        <Ribbon>
          <Group $w={86}>
            <GroupBody>
              <Col $w={34} $ml={8} $pt={4}>
                <svg width="30" height="32" viewBox="0 0 30 32"><rect x="1" y="4" width="24" height="27" fill="#eec77c" /><path d="M6 3h4q0-3 3-3t3 3h4v5H6z" fill="#666" /><circle cx="13" cy="3" r="1.200" fill="#fff" /><path d="M15 14h9l5 5v12H15z" fill="#fff" stroke="#777" /><path d="M24 14v5h5" fill="none" stroke="#777" /></svg>
                <Spacer $h={1} />
                <BigLabel><Fit w={28}>Paste</Fit></BigLabel>
                <Row $h={14}><Caret c="#555" /></Row>
              </Col>
              <Col $ml={7} $pt={2} $gap={8} $start>
                <svg width="16" height="16" viewBox="0 0 16 16"><path d="M4.500 0l5 10M11.500 0l-5 10" stroke={g} strokeWidth="1.800" /><circle cx="4" cy="12.500" r="2.600" fill="none" stroke={g} strokeWidth="1.300" /><circle cx="12" cy="12.500" r="2.600" fill="none" stroke={g} strokeWidth="1.300" /></svg>
                <Row $gap={6}><svg width="16" height="15" viewBox="0 0 16 15"><path d="M.5.5h7v10h-7zM6.500 3.500h6l3 3V14h-9z" fill="#fff" stroke={g} /><path d="M2 3h3M2 5h3M8 8h5M8 10h5M8 12h5" stroke={g} /></svg><Caret /></Row>
                <svg width="16" height="15" viewBox="0 0 16 15"><path d="M1 8l5-3 5 5-4 5z" fill="#cfcfcf" /><path d="M7 5l3-2 4 4-3 3z" fill="#888" /><path d="M11 4l4-4 1 2-3 4z" fill="#aaa" /></svg>
              </Col>
            </GroupBody>
            <GroupLabel><Fit w={51}>Clipboard</Fit><Push $w={15} /><Launcher width="7" height="7" viewBox="0 0 7 7"><path d="M.5 6V.5H6M3 3l3.500 3.500M6.500 3.500v3h-3" fill="none" stroke="#888" /></Launcher></GroupLabel>
          </Group>
          <Group $w={84}>
            <GroupBody>
              <Col $w={36} $ml={6} $pt={1}>
                <svg width="32" height="34" viewBox="0 0 32 34"><rect x="3" y="8.500" width="28" height="24" rx="2" fill="#fff" stroke="#777" /><path d="M10 12h17v8H10z" fill="#cfcfcf" /><path d="M7 24h20M7 28h20" stroke="#888" /><circle cx="7" cy="6.500" r="4" fill="#fff" /><path d="M7 0v13M.5 6.500h13M2.500 2l9 9M11.500 2l-9 9" stroke="#eec06a" strokeWidth="1.800" /><circle cx="7" cy="6.500" r="1.800" fill="#fff" /></svg>
                <Spacer $h={2} />
                <BigLabel><Fit w={24}>New</Fit></BigLabel>
                <BigLabel><Fit w={26}>Slide</Fit><Caret c="#555" /></BigLabel>
              </Col>
              <Col $ml={7} $pt={3} $gap={8} $start>
                <Row $gap={4}><svg width="17" height="15" viewBox="0 0 17 15"><rect x=".5" y=".5" width="16" height="14" fill="#fff" stroke="#666" /><path d="M2.500 2.500h12v2h-12zM2.500 6h5v7h-5z" fill="#c9c9c9" /><path d="M9 7.500h5.500M9 10h5.500M9 12.500h5.500" stroke="#888" /></svg><Caret c="#555" /></Row>
                <svg width="17" height="16" viewBox="0 0 17 16"><path d="M3.500 6h13v9.500h-13z" fill="#fff" stroke="#666" /><path d="M6 9h3v4H6z" fill="#c9c9c9" /><path d="M10 9.500h4M10 12h4" stroke="#888" /><path d="M1 4h7q4 0 4 3M4.500.5L1 4l3.500 3.500" fill="none" stroke="#3c76b8" strokeWidth="1.800" /></svg>
                <Row $gap={4}><svg width="17" height="16" viewBox="0 0 17 16"><path d="M7 2h9M7 5h9" stroke="#e08a3a" strokeWidth="1.500" /><path d="M6.500 8h9v7.500h-9z" fill="#fff" stroke="#666" /><path d="M8.500 10h5v2h-5z" fill="#c9c9c9" /><path d="M3.500 0v7M0 3.500h7M1 1l5 5M6 1L1 6" stroke="#e8b04e" /></svg><Caret c="#555" /></Row>
              </Col>
            </GroupBody>
            <GroupLabel><Fit w={31}>Slides</Fit></GroupLabel>
          </Group>
          <Group $w={228}>
            <Col $start>
              <Row $h={23} $ml={4} $mt={7}>
                <Combo $w={105}><Caret /></Combo><Combo $w={41}><Caret /></Combo>
                <Cell $w={24}><Glyph $s={15}>A</Glyph><Row $h={18}><svg width="5" height="16" viewBox="0 0 5 16"><path d="M0 4L2.500 1 5 4z" fill={g} /></svg></Row></Cell>
                <Cell $w={22}><Glyph $s={12.5}>A</Glyph><svg width="5" height="16" viewBox="0 0 5 16"><path d="M0 1h5L2.500 4z" fill={g} /></svg></Cell>
                <Cell $w={6}><Sep /></Cell>
                <Cell $w={29}><svg width="15" height="16" viewBox="0 0 15 16"><path d="M1 9L4 1l3 8M2 6h4" stroke={g} fill="none" strokeWidth="1.300" /><path d="M5 10l6-6 4 4-6 7-3-1z" fill="#b9b9b9" /></svg></Cell>
              </Row>
              <Row $h={22} $ml={3} $mt={8}>
                <Cell $w={21}><Glyph $b $s={12.5}>B</Glyph></Cell><Cell $w={22}><Glyph $i $s={14}>I</Glyph></Cell><Cell $w={22}><Glyph $u $b $s={12.5}>U</Glyph></Cell><Cell $w={23}><Glyph $b $shadow>S</Glyph></Cell>
                <Cell $w={22}><Glyph $strike $s={9.5}>abc</Glyph></Cell>
                <Cell $w={22}><svg width="16" height="16" viewBox="0 0 16 16"><text x="0" y="10" fontSize="11" fontWeight="600" fill={g} textLength="15">AV</text><path d="M1 13.500h14M3 11.500l-2 2 2 2M13 11.500l2 2-2 2" stroke={g} fill="none" /></svg></Cell>
                <Cell $w={9}><Caret /></Cell>
                <Cell $w={26}><Glyph $s={12}>Aa</Glyph></Cell><Cell $w={4}><Caret /></Cell>
                <Cell $w={20}><Sep /></Cell>
                <Cell $w={13}><Glyph $b $s={14}>A</Glyph></Cell><Cell $w={20}><Caret /></Cell>
              </Row>
            </Col>
            <GroupLabel><Push $w={18} /><Fit w={24}>Font</Fit><Push $w={34} /><Launcher width="7" height="7" viewBox="0 0 7 7"><path d="M.5 6V.5H6M3 3l3.500 3.500M6.500 3.500v3h-3" fill="none" stroke="#aaa" /></Launcher></GroupLabel>
          </Group>
          <Group $w={193}>
            <GroupBody>
              <Col $start $w={159}>
                <Row $h={23} $ml={7} $mt={7}>
                  <Cell $w={15}><svg width="14" height="15" viewBox="0 0 14 15"><path d="M0 1.500h3M0 7.500h3M0 13.500h3" stroke={g} strokeWidth="2.500" /><path d="M5 2h9M5 7.500h9M5 13h9" stroke={g} /></svg></Cell><Cell $w={16}><Caret /></Cell>
                  <Cell $w={18}><svg width="15" height="17" viewBox="0 0 15 17"><path d="M2 0v4M.5 7h3v2h-3v1h3M.5 12.500h3v3h-3" stroke={g} fill="none" /><path d="M6 3h9M6 8.500h9M6 14h9" stroke={g} /></svg></Cell><Cell $w={17}><Caret /></Cell>
                  <Cell $w={22}><svg width="16" height="13" viewBox="0 0 16 13"><path d="M3 .5h13M8 4h8M8 7.500h8M3 11h13M1 6h6M4 3L1 6l3 3" stroke={g} fill="none" strokeWidth="1.300" /></svg></Cell>
                  <Cell $w={22}><svg width="16" height="13" viewBox="0 0 16 13"><path d="M3 .5h13M8 4h8M8 7.500h8M3 11h13M0 6h6M3 3l3 3-3 3" stroke={g} fill="none" strokeWidth="1.300" /></svg></Cell>
                  <Cell $w={28}><svg width="16" height="17" viewBox="0 0 16 17"><path d="M3 1v15M.5 4L3 1l2.500 3M.5 13L3 16l2.500-3M8 3.500h8M8 8.500h8M8 13.500h8" stroke={g} fill="none" /></svg></Cell><Cell $w={6}><Caret /></Cell>
                </Row>
                <Row $h={22} $ml={7} $mt={8}>
                  <Cell $w={15}>{lines("M0 1.500h14M0 5h9M0 8.500h14M0 12h9")}</Cell><Push $w={7} />
                  <Cell $w={15}>{lines("M0 1.500h14M2.500 5h9M0 8.500h14M2.500 12h9")}</Cell><Push $w={7} />
                  <Cell $w={15}>{lines("M0 1.500h14M5 5h9M0 8.500h14M5 12h9")}</Cell><Push $w={7} />
                  <Cell $w={15}>{lines("M0 1.500h14M0 5h14M0 8.500h14M0 12h14")}</Cell>
                  <Cell $w={16}><Sep /></Cell>
                  <Cell $w={15}>{lines("M0 1.500h6M8 1.500h6M0 5h6M8 5h6M0 8.500h6M8 8.500h6M0 12h6M8 12h6")}</Cell><Cell $w={14}><Caret /></Cell>
                </Row>
              </Col>
              <Col $pt={2} $gap={7} $start>
                <Row $gap={4}><svg width="16" height="17" viewBox="0 0 16 17"><path d="M1.500 0v16M5.500 0v16M9.500 11v5M13.500 11v5" stroke={g} /><text x="7" y="9" fontSize="11" fontWeight="700" fill={g}>A</text></svg><Caret /></Row>
                <Row $gap={4}><svg width="16" height="16" viewBox="0 0 16 16"><path d="M3 .5H.5v15H3M13 .5h2.500v15H13M4 6.500h8M4 9.500h8M8 0v5M6 2l2-2 2 2M8 11v5M6 14l2 2 2-2" stroke={g} fill="none" /></svg><Caret /></Row>
                <Row $gap={4}><svg width="16" height="16" viewBox="0 0 16 16"><path d="M0 0h9l4 4H5L1 8z" fill="#a9a9a9" /><path d="M5.500 6.500h9v9h-9z" fill="#f8f4fa" stroke={g} /><path d="M8 9.500h1M10 9.500h3M8 12.500h1M10 12.500h3" stroke={g} /></svg><Caret /></Row>
              </Col>
            </GroupBody>
            <GroupLabel><Fit w={53}>Paragraph</Fit><Push $w={17} /><Launcher width="7" height="7" viewBox="0 0 7 7"><path d="M.5 6V.5H6M3 3l3.500 3.500M6.500 3.500v3h-3" fill="none" stroke="#aaa" /></Launcher></GroupLabel>
          </Group>
        </Ribbon>
        <PptMain>
          <ThumbList>
            {thumbs.map((t) => (
              <ThumbRow key={t.n}>
                <ThumbNum $sel={t.n === 28}><Fit w={17}>{String(t.n)}</Fit><Star /></ThumbNum>
                <ThumbFrame $sel={t.n === 28}><svg width="82" height="61" viewBox="0 0 82 61" fontFamily={ARIAL}>{t.art}</svg></ThumbFrame>
              </ThumbRow>
            ))}
          </ThumbList>
          <VScroll>
            <ScrollBox $h={15}><Tri d="up" c="#666" /></ScrollBox>
            <ScrollBox $h={171} $mt={390} />
            <ScrollBox $h={15} $mt={315}><Tri d="down" c="#666" /></ScrollBox>
          </VScroll>
          <Stage>
            <Slide>
              <SectionBand><Fit w={419}>SECTION 2: TYPES OF DIAGRAMS / COMPONENT DIAGRAM</Fit></SectionBand>
              <TitleBand><Fit w={261}>Component</Fit><Fit w={188}>Diagram</Fit></TitleBand>
              <SlideDiagram />
              <Stripe><StripePart $w={53} $c="#ff3366" /><StripePart $w={105} $c="#006699" /><StripePart $w={170} $c="#3d8bb0" /><StripePart $w={120} $c="#7db0c8" /></Stripe>
              <SlideFoot><Epam /><Tagline><Fit w={253}>Excellence in Software Engineering</Fit></Tagline></SlideFoot>
            </Slide>
            <HScroll><HBtn><Tri d="left" c="#666" /></HBtn><HThumb /></HScroll>
          </Stage>
        </PptMain>
        <PptStatus>
          <Fit w={76}>SLIDE 28 OF 56</Fit><Push $w={19} />
          <svg width="15" height="13" viewBox="0 0 15 13"><path d="M7 2Q4 0 .5 1v10Q4 10 7 12zM7 2q2-1.500 4-1.500M7 12q3-2 6.500-1V7" fill="none" stroke="#fff" /><path d="M8.500 8L14 1.500" stroke="#fff" strokeWidth="1.500" /></svg>
          <Push $w={17} /><Fit w={129}>ENGLISH (UNITED STATES)</Fit><Push $w={122} />
          <svg width="12" height="12" viewBox="0 0 12 12"><path d="M6 0l3 3.500H3z" fill="#fff" /><path d="M0 5h12M0 8h12M0 11h8" stroke="#fff" /></svg>
          <Push $w={5} /><Fit w={34}>NOTES</Fit><Push $w={20} />
          <svg width="13" height="12" viewBox="0 0 13 12"><path d="M0 0h13v8H7l-3 4V8H0z" fill="#fbe6e0" /></svg>
          <Push $w={4} /><Fit w={61}>COMMENTS</Fit><Push $w={19} />
          <ViewBtn><svg width="15" height="12" viewBox="0 0 15 12"><path d="M.5.5h14v11H.5zM4.500.5v11M4.500 8h10" fill="none" stroke="#fff" strokeWidth="1.300" /><path d="M7 3h5v3H7z" fill="#fff" /></svg></ViewBtn>
        </PptStatus>
      </Ppt>

      <Pd>
        <PdTitle>
          <Logo />
          <Fit w={700}>{"PowerDesigner [OOM ObjectOrientedModel_3, UseCaseDiagram_1 - D:\\eclipse\\workspace3\\JMP\\UML\\ObjectOrientedModel_3.oom]"}</Fit>
          <WinButtons>
            <WinBtn><svg width="11" height="5" viewBox="0 0 11 5"><rect x=".5" y=".5" width="10" height="4" rx="1" fill="#fff" stroke="#47505c" /></svg></WinBtn>
            <WinBtn><svg width="11" height="10" viewBox="0 0 11 10"><rect x=".5" y=".5" width="10" height="9" rx="1" fill="#fff" stroke="#47505c" /><rect x="3.500" y="3.500" width="4" height="3" fill="#b4c9e0" stroke="#47505c" /></svg></WinBtn>
            <WinBtn $close><svg width="12" height="10" viewBox="0 0 12 10"><path d="M2 1.500l8 7M10 1.500l-8 7" stroke="#555" strokeWidth="3.600" /><path d="M2 1.500l8 7M10 1.500l-8 7" stroke="#fff" strokeWidth="2.200" /></svg></WinBtn>
          </WinButtons>
        </PdTitle>
        <Menu>{menu.map(([t, w]) => <Fit key={t} w={w}>{t}</Fit>)}</Menu>
        <Bars>
          <BarSet w={373} items={bar1} />
          <BarSet w={325} items={bar2} />
          <BarSet w={228} items={bar3} on={["w7", "w8"]} />
          <BarSet w={61} items={bar4} />
        </Bars>
        <Work>
          <WorkTop>
            <SideStrip><ObjBrowser><Fit w={80}>Object Browser</Fit></ObjBrowser></SideStrip>
            <Doc>
              <DocTabs>
                <DTab w={114} pl={23} ml={0} t="ClassDiagram_1" tw={83} />
                <DTab w={122} pl={21} ml={-6} t="ObjectDiagram_1" tw={91} />
                <DTab w={135} pl={21} ml={-6} t="UseCaseDiagram_1" tw={106} on />
                <DTab w={124} pl={19} ml={-3} t="ActivityDiagram_1" tw={95} />
                <DTab w={146} pl={18} ml={-3} t="ComponentDiagram_1" tw={119} />
                <DocBtns><svg width="9" height="8" viewBox="0 0 9 8"><path d="M0 1h9" stroke="#222" strokeWidth="1.500" /><path d="M0 3.500h9L4.500 8z" fill="#222" /></svg><CloseX s={10} /></DocBtns>
              </DocTabs>
              <DocFrame>
                <DocInner>
                  <Canvas><UseCases /></Canvas>
                  <VBar><Spacer $h={5} /><Tri d="up" c="#333" s={7} /><Spacer $h={333} /><ThumbV $h={18}><Grip v /></ThumbV><Spacer $h={332} /><Tri d="down" c="#333" s={7} /></VBar>
                  <HBar><Spacer $w={5} /><Tri d="left" c="#333" s={7} /><Spacer $w={476} /><ThumbH $w={39}><Grip /></ThumbH><Spacer $w={474} /><Tri d="right" c="#333" s={7} /></HBar>
                </DocInner>
              </DocFrame>
            </Doc>
            <Toolbox>
              <PanelHead><Fit w={43}>Toolbox</Fit><HeadBtns /></PanelHead>
              <ToolStrip><GridTool $on><Ico n="g1" /></GridTool><GridTool><Ico n="g2" /></GridTool></ToolStrip>
              {sections.map((s) => (
                <React.Fragment key={s.t}>
                  <SecHead>
                    <svg width="20" height="20" viewBox="0 0 20 20"><circle cx="10" cy="10" r="9" fill="#f4f4f4" stroke="#8a8a8a" /><path d="M6.500 11.500L10 8l3.500 3.500" fill="none" stroke="#333" strokeWidth="2" /></svg>
                    <Fit w={s.w}>{s.t}</Fit>
                  </SecHead>
                  <SecGrid>{s.items.map((i) => <GridTool key={i} $on={s.on === i}><Ico n={i} /></GridTool>)}</SecGrid>
                </React.Fragment>
              ))}
            </Toolbox>
          </WorkTop>
          <Output>
            <PanelHead><Fit w={38}>Output</Fit><HeadBtns /></PanelHead>
            <OutBody>
              <OutText><Fit w={248}>You may use the product for a trial period of 15 days.</Fit></OutText>
              <VBar><Spacer $h={4} /><Tri d="up" c="#333" s={7} /><Spacer $h={4} /><ThumbV $h={130}><Grip v /></ThumbV><Spacer $h={7} /><Tri d="down" c="#333" s={7} /></VBar>
            </OutBody>
            <OutFoot>
              <OutTabs>
                <NavBtn><Tri d="left" c="#aaa" /></NavBtn><NavBtn><Tri d="right" c="#aaa" /></NavBtn>
                <STab w={64} pl={9} ml={1} t="General" tw={43} on />
                <STab w={88} pl={9} ml={-6} t="Check Model" tw={71} />
                <STab w={81} pl={12} ml={-6} t="Generation" tw={61} />
                <STab w={66} pl={12} ml={-6} t="Reverse" tw={46} />
              </OutTabs>
              <HBar $grow><Spacer $w={8} /><Tri d="left" c="#333" s={7} /><Spacer $w={5} /><ThumbH $w={576}><Grip /></ThumbH><Spacer $w={7} /><Tri d="right" c="#333" s={7} /><Spacer $w={9} /><Dots /></HBar>
            </OutFoot>
          </Output>
        </Work>
        <PdStatus><Fit w={235}>ObjectOrientedModel_5 - (Not in repository)</Fit><JavaBtn><Fit w={23}>Java</Fit></JavaBtn><ResizeCorner><Dots /></ResizeCorner></PdStatus>
      </Pd>

      <Taskbar>
        <Orb>
          <svg width="38" height="38" viewBox="0 0 38 38">
            <defs><radialGradient id="orbG" cx=".5" cy=".9" r=".9"><stop offset="0" stopColor="#7fe0fa" /><stop offset=".5" stopColor="#2f7fb8" /><stop offset="1" stopColor="#173d6a" /></radialGradient></defs>
            <circle cx="19" cy="19" r="17.800" fill="url(#orbG)" stroke="#16324f" />
            <path d="M3 17a16 15 0 0 1 32 0q-16 5-32 0z" fill="#fff" opacity=".28" />
            <path d="M10 11q4-3 8 0l-2 7q-4-2.500-8 0z" fill="#f0642c" /><path d="M19.500 11.500q4 2.500 9-.5l-2 7.500q-4.500 2.500-9 0z" fill="#9ccb3b" /><path d="M7.800 19.500q4-2.500 8 0l-2 7q-4-2.500-8 0z" fill="#4aa8e8" /><path d="M17 20q4.500 2.500 9 0l-2 7q-4.500 2.500-9 0z" fill="#fccb38" />
          </svg>
        </Orb>
        <Launch><svg width="14" height="14" viewBox="0 0 14 14"><rect width="14" height="14" rx="1" fill="#f6f6f6" /><path d="M2.500 2.500h2.500v2.500h-2.500z" fill="#e33" /><path d="M5.800 2.500h2.500v2.500h-2.500z" fill="#e33" /><path d="M9 2.500h2.500v2.500H9z" fill="#f90" /><path d="M2.500 5.800h2.500v2.500h-2.500z" fill="#3a5" /><path d="M5.800 5.800h2.500v2.500h-2.500z" fill="#48e" /><path d="M9 5.800h2.500v2.500H9z" fill="#fb0" /><path d="M2.500 9h2.500v2.500h-2.500z" fill="#3a5" /><path d="M5.800 9h2.500v2.500h-2.500z" fill="#3a5" /><path d="M9 9h2.500v2.500H9z" fill="#fb0" /></svg></Launch>
        <TaskList>{taskIcons.map((t, i) => <Task key={i} $k={t.k}><svg width="16" height="16" viewBox="0 0 16 16">{t.i}</svg></Task>)}</TaskList>
        <Tray>
          <TrayRow $h={24}><Fit w={14}>EN</Fit></TrayRow>
          <TrayRow $h={29} $left><Tri d="left" c="#fff" /></TrayRow>
          <TrayRow $h={20} $gap={8}>
            <svg width="16" height="16" viewBox="0 0 16 16"><path d="M2.500 1v14M3 2h7v6H3" fill="#eef2f6" stroke="#fff" /><circle cx="10.500" cy="11" r="4" fill="#d9322a" stroke="#fff" strokeWidth=".6" /><path d="M8.800 9.300l3.400 3.400M12.200 9.300l-3.400 3.400" stroke="#fff" strokeWidth="1.300" /></svg>
            <svg width="16" height="16" viewBox="0 0 16 16"><rect x="4.500" y="3.500" width="11" height="8.500" fill="#5d7087" stroke="#fff" strokeWidth="1.200" /><path d="M8 15h6M2.500 5v10M1 1v4h3V1" stroke="#fff" strokeWidth="1.300" fill="none" /></svg>
          </TrayRow>
          <Spacer $h={4} />
          <TrayRow $h={20} $gap={8}>
            <svg width="16" height="16" viewBox="0 0 16 16"><path d="M2 5.500h3l4-4.500v14l-4-4.500H2z" fill="#fff" stroke="#667" strokeWidth=".6" /><path d="M11 5q2 3 0 6" fill="none" stroke="#fff" /></svg>
            <svg width="16" height="16" viewBox="0 0 16 16"><path d="M1 10L7 2l6 2-3 6z" fill="#e9eef3" stroke="#fff" /><path d="M1 13q5-4 8-3" stroke="#fff" fill="none" /><circle cx="11" cy="11" r="4.300" fill="#1b66b8" stroke="#fff" strokeWidth=".7" /><path d="M9 11a2 2 0 0 1 4 0M13 12a2 2 0 0 1-3.500 0" stroke="#fff" fill="none" /></svg>
          </TrayRow>
          <Spacer $h={3} />
          <Fit w={42}>5:03 PM</Fit>
          <Fit w={53}>03-Feb-15</Fit>
          <ShowDesk />
        </Tray>
      </Taskbar>
    </Desktop>
  );
}
